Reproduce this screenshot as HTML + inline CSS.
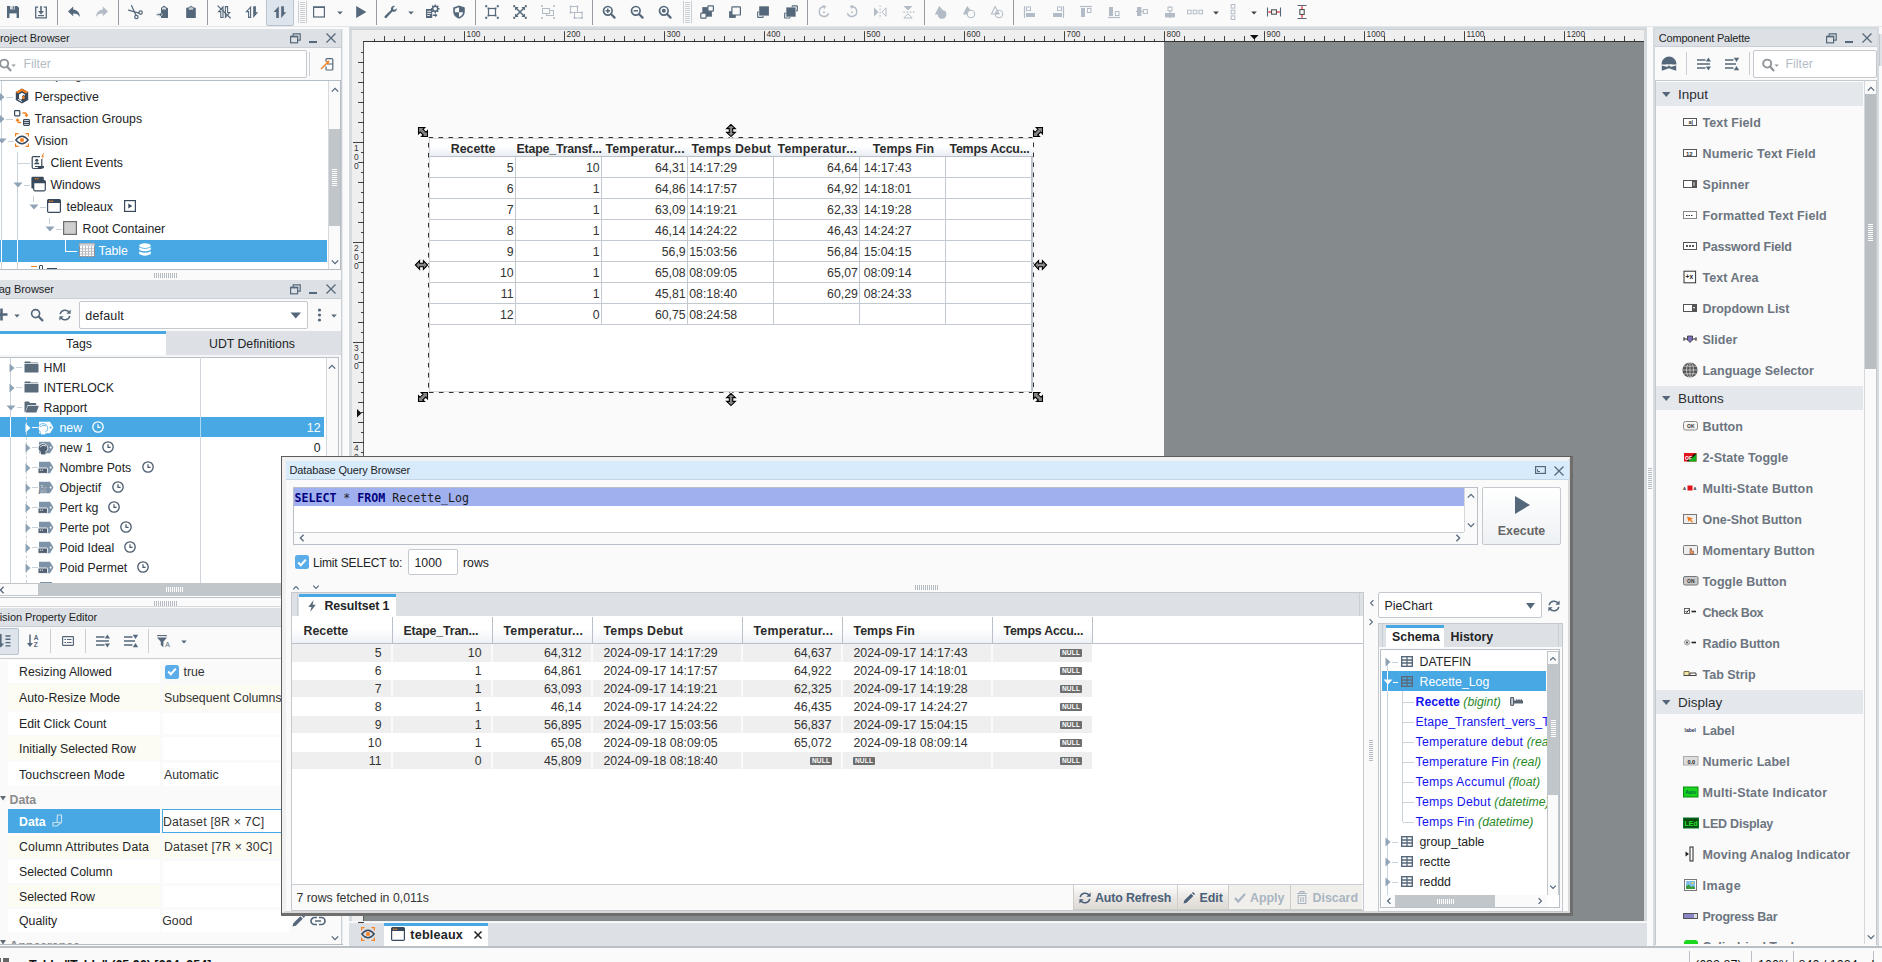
<!DOCTYPE html>
<html><head><meta charset="utf-8"><title>Designer</title>
<style>
html,body{margin:0;padding:0;}
body{width:1882px;height:962px;overflow:hidden;background:#fafafa;position:relative;font-family:"Liberation Sans","DejaVu Sans",sans-serif;font-size:12.3px;color:#222426;}
div,svg,span.a{position:absolute;box-sizing:border-box;}
svg{overflow:visible;}
.t{white-space:nowrap;}
.b{white-space:nowrap;font-weight:bold;font-size:12.4px;}
.clip{overflow:hidden;}
.mono{font-family:"DejaVu Sans Mono","Liberation Mono",monospace;font-size:11.6px;white-space:pre;}
</style></head><body>
<svg style="left:5px;top:4px;" width="16" height="16" viewBox="0 0 16 16"><path fill="#55687b" d="M2 2h10.2L14 3.8V14H2z"/><rect x="5" y="2" width="5" height="3.4" fill="#d5dade"/><rect x="7.8" y="2.5" width="1.4" height="2.4" fill="#55687b"/><rect x="4.4" y="9.4" width="7.2" height="4.6" fill="#fafafa"/></svg>
<svg style="left:33px;top:4px;" width="16" height="16" viewBox="0 0 16 16"><path fill="none" stroke="#55687b" stroke-width="1.3" d="M5.2 3.2H2.7v10.6h10.6V3.2h-2.5"/><path fill="#55687b" d="M7.2 2h1.6v5h2.2L8 10.4 5 7h2.2z"/><rect x="5" y="11" width="6" height="1.2" fill="#55687b"/></svg>
<div style="left:57px;top:0px;width:1px;height:25px;background:#959ba1;"></div>
<svg style="left:66px;top:4px;" width="16" height="16" viewBox="0 0 16 16"><path fill="#55687b" d="M7.2 2.6L2 7.4l5.2 4.8V9.4c3-.1 5.2.9 6.8 3.6-.3-4.400-2.700-7.200-6.800-7.600z"/></svg>
<svg style="left:94px;top:4px;" width="16" height="16" viewBox="0 0 16 16"><g transform="translate(16,0) scale(-1,1)"><path fill="#b3bcc6" d="M7.2 2.6L2 7.4l5.2 4.8V9.4c3-.1 5.2.9 6.8 3.6-.3-4.400-2.700-7.200-6.800-7.600z"/></g></svg>
<div style="left:118px;top:0px;width:1px;height:25px;background:#959ba1;"></div>
<svg style="left:127px;top:4px;" width="16" height="16" viewBox="0 0 16 16"><g fill="none" stroke="#55687b" stroke-width="1.2" stroke-linecap="round"><path d="M4.5 1.5L9 11.2"/><path d="M1.500 6.200L12 9.200"/><circle cx="9.400" cy="13" r="1.700"/><circle cx="13.600" cy="8.600" r="1.700"/></g></svg>
<svg style="left:155px;top:4px;" width="16" height="16" viewBox="0 0 16 16"><path fill="#55687b" d="M6 3.500h1.300a1.700 1.700 0 0 1 3.400 0H12l1 1V14H6z"/><circle cx="9" cy="3.400" r=".7" fill="#fafafa"/><rect x="7" y="4.200" width="4" height="1.200" fill="#fafafa"/><path fill="#55687b" stroke="#fafafa" stroke-width=".6" d="M1.500 9.800h3V8l3 2.600-3 2.600v-1.800h-3z"/></svg>
<svg style="left:183px;top:4px;" width="16" height="16" viewBox="0 0 16 16"><path fill="#55687b" d="M4 3.500h2.300a1.700 1.700 0 0 1 3.400 0H12l.8.800V14H3.200V4.300z"/><circle cx="8" cy="3.300" r=".7" fill="#fafafa"/><rect x="5.800" y="4.300" width="4.400" height="1.200" fill="#fafafa"/></svg>
<div style="left:207px;top:0px;width:1px;height:25px;background:#959ba1;"></div>
<svg style="left:216px;top:4px;" width="16" height="16" viewBox="0 0 16 16"><g fill="none" stroke="#55687b" stroke-width="1.100" stroke-linejoin="miter"><path d="M7 2.800L2.600 7.600H4.800V13.500H7z"/><path d="M9.400 2.600H11.600V8.500H13.700L9.400 13.300z"/></g><path stroke="#55687b" stroke-width="1.200" d="M1.600 1.600L14.600 14.200"/></svg>
<svg style="left:244px;top:4px;" width="16" height="16" viewBox="0 0 16 16"><path fill="none" stroke="#55687b" stroke-width="1.100" stroke-linejoin="miter" d="M6.600 3.200L2.400 7.600H4.600V13.400H6.600z"/><path fill="#55687b" d="M9.200 2.300H11.900V8.300H14.200L9.200 13.900z"/></svg>
<div style="left:266px;top:-1px;width:28px;height:27px;background:#dde4ec;border:1px solid #b9c3cd;border-radius:2px;"></div>
<svg style="left:272px;top:4px;" width="16" height="16" viewBox="0 0 16 16"><path fill="#55687b" d="M6.800 2.300L1.500 7.900H4.200V13.900H6.800z"/><path fill="#55687b" d="M9.200 2.300H11.900V8.300H14.200L9.200 13.900z"/></svg>
<svg style="left:298px;top:1px;" width="9" height="22" viewBox="0 0 9 22"><path stroke="#c9ced3" stroke-width="1" d="M.5 0v22M8.500 0v22"/><path stroke="#c9ced3" stroke-width="1" d="M2 1.5h5"/><path stroke="#c9ced3" stroke-width="1" d="M2 3.5h5"/><path stroke="#c9ced3" stroke-width="1" d="M2 5.5h5"/><path stroke="#c9ced3" stroke-width="1" d="M2 7.5h5"/><path stroke="#c9ced3" stroke-width="1" d="M2 9.5h5"/><path stroke="#c9ced3" stroke-width="1" d="M2 11.5h5"/><path stroke="#c9ced3" stroke-width="1" d="M2 13.5h5"/><path stroke="#c9ced3" stroke-width="1" d="M2 15.5h5"/><path stroke="#c9ced3" stroke-width="1" d="M2 17.5h5"/><path stroke="#c9ced3" stroke-width="1" d="M2 19.5h5"/><path stroke="#c9ced3" stroke-width="1" d="M2 21.5h5"/></svg>
<svg style="left:311px;top:4px;" width="16" height="16" viewBox="0 0 16 16"><rect x="2.600" y="3.200" width="10.800" height="9.800" fill="none" stroke="#55687b" stroke-width="1.200"/><rect x="2" y="2.400" width="12" height="1.600" fill="#55687b"/></svg>
<svg style="left:331.5px;top:4.5px;" width="16" height="16" viewBox="0 0 16 16"><path fill="#55687b" d="M5.200 6.600h5.600L8 9.600z"/></svg>
<svg style="left:353px;top:4px;" width="16" height="16" viewBox="0 0 16 16"><path fill="#55687b" d="M3.200 2L13.400 8 3.200 14z"/></svg>
<div style="left:376px;top:0px;width:1px;height:25px;background:#959ba1;"></div>
<svg style="left:383px;top:4px;" width="16" height="16" viewBox="0 0 16 16"><path fill="#55687b" d="M13.900 4.300a3.300 3.300 0 0 1-4.500 3.300L3.600 13.800a1.200 1.200 0 0 1-1.800-1.700L8 6.100a3.300 3.300 0 0 1 4-4.200L10 3.900l.4 1.500 1.500.4z"/></svg>
<svg style="left:402.5px;top:4.5px;" width="16" height="16" viewBox="0 0 16 16"><path fill="#55687b" d="M5.200 6.600h5.600L8 9.600z"/></svg>
<svg style="left:424px;top:4px;" width="16" height="16" viewBox="0 0 16 16"><path fill="#55687b" d="M2 5h6.200v9H2z"/><g stroke="#fafafa" stroke-width=".9"><path d="M3.200 7.300h4"/><path d="M3.200 9.400h4"/><path d="M3.200 11.500h2.600"/></g><g transform="translate(11.200,4.800)"><circle r="2.500" fill="none" stroke="#55687b" stroke-width="1.500"/><rect x="-.75" y="-4.300" width="1.500" height="1.700" fill="#55687b" transform="rotate(0)"/><rect x="-.75" y="-4.300" width="1.500" height="1.700" fill="#55687b" transform="rotate(45)"/><rect x="-.75" y="-4.300" width="1.500" height="1.700" fill="#55687b" transform="rotate(90)"/><rect x="-.75" y="-4.300" width="1.500" height="1.700" fill="#55687b" transform="rotate(135)"/><rect x="-.75" y="-4.300" width="1.500" height="1.700" fill="#55687b" transform="rotate(180)"/><rect x="-.75" y="-4.300" width="1.500" height="1.700" fill="#55687b" transform="rotate(225)"/><rect x="-.75" y="-4.300" width="1.500" height="1.700" fill="#55687b" transform="rotate(270)"/><rect x="-.75" y="-4.300" width="1.500" height="1.700" fill="#55687b" transform="rotate(315)"/></g><path fill="#55687b" d="M8.800 10.500h2.400V9l2.200 2.200-2.200 2.200v-1.500H8.800z"/></svg>
<svg style="left:451px;top:4px;" width="16" height="16" viewBox="0 0 16 16"><path fill="#55687b" d="M8 1.400l5.800 2.100v4.300c0 3.300-2.300 5.800-5.800 7.000C4.500 13.600 2.200 11.100 2.200 7.800V3.500z"/><path fill="#fafafa" d="M8 3.200v5H3.900V4.700z"/><path fill="#fafafa" d="M8 8.200h4.100c-.2 2.200-1.700 3.800-4.100 4.800z"/></svg>
<div style="left:475px;top:0px;width:1px;height:25px;background:#959ba1;"></div>
<svg style="left:484px;top:4px;" width="16" height="16" viewBox="0 0 16 16"><rect x="4.500" y="4.500" width="7" height="7" fill="none" stroke="#55687b" stroke-width="1.200"/><rect x="1.2000000000000002" y="1.2000000000000002" width="2" height="2" fill="#55687b"/><rect x="12.8" y="1.2000000000000002" width="2" height="2" fill="#55687b"/><rect x="1.2000000000000002" y="12.8" width="2" height="2" fill="#55687b"/><rect x="12.8" y="12.8" width="2" height="2" fill="#55687b"/><rect x="3.6" y="3.6" width="1.8" height="1.8" fill="#55687b"/><rect x="10.6" y="3.6" width="1.8" height="1.8" fill="#55687b"/><rect x="3.6" y="10.6" width="1.8" height="1.8" fill="#55687b"/><rect x="10.6" y="10.6" width="1.8" height="1.8" fill="#55687b"/></svg>
<svg style="left:512px;top:4px;" width="16" height="16" viewBox="0 0 16 16"><path stroke="#55687b" stroke-width="1.500" d="M4 4l8 8M12 4l-8 8"/><path fill="#55687b" d="M-1.200 -1.200h3.600l-3.600 3.600z" transform="translate(4.2,4.2) rotate(0)"/><path fill="#55687b" d="M-1.200 -1.200h3.600l-3.600 3.600z" transform="translate(11.8,4.2) rotate(90)"/><path fill="#55687b" d="M-1.200 -1.200h3.600l-3.600 3.600z" transform="translate(11.8,11.8) rotate(180)"/><path fill="#55687b" d="M-1.200 -1.200h3.600l-3.600 3.600z" transform="translate(4.2,11.8) rotate(270)"/><rect x="1.2000000000000002" y="1.2000000000000002" width="2" height="2" fill="#55687b"/><rect x="12.8" y="1.2000000000000002" width="2" height="2" fill="#55687b"/><rect x="1.2000000000000002" y="12.8" width="2" height="2" fill="#55687b"/><rect x="12.8" y="12.8" width="2" height="2" fill="#55687b"/></svg>
<svg style="left:540px;top:4px;" width="16" height="16" viewBox="0 0 16 16"><g fill="#fafafa" stroke="#b3bcc6" stroke-width="1"><rect x="6.500" y="6.500" width="7" height="5"/><rect x="2.500" y="4.500" width="7" height="5"/></g><rect x="1.1" y="1.1" width="1.8" height="1.8" fill="#b3bcc6"/><rect x="13.1" y="1.1" width="1.8" height="1.8" fill="#b3bcc6"/><rect x="1.1" y="13.1" width="1.8" height="1.8" fill="#b3bcc6"/><rect x="13.1" y="13.1" width="1.8" height="1.8" fill="#b3bcc6"/></svg>
<svg style="left:568px;top:4px;" width="16" height="16" viewBox="0 0 16 16"><g fill="none" stroke="#b3bcc6" stroke-width="1"><rect x="2.500" y="2.500" width="7" height="6"/><rect x="6.500" y="8.500" width="7.500" height="5.500"/></g><rect x="1.6" y="1.6" width="1.8" height="1.8" fill="#b3bcc6"/><rect x="8.6" y="1.6" width="1.8" height="1.8" fill="#b3bcc6"/><rect x="1.6" y="7.6" width="1.8" height="1.8" fill="#b3bcc6"/><rect x="13.1" y="7.6" width="1.8" height="1.8" fill="#b3bcc6"/><rect x="5.6" y="13.1" width="1.8" height="1.8" fill="#b3bcc6"/><rect x="13.1" y="13.1" width="1.8" height="1.8" fill="#b3bcc6"/></svg>
<div style="left:592px;top:0px;width:1px;height:25px;background:#959ba1;"></div>
<svg style="left:601px;top:4px;" width="16" height="16" viewBox="0 0 16 16"><circle cx="6.800" cy="6.800" r="4.300" fill="none" stroke="#55687b" stroke-width="1.700"/><path stroke="#55687b" stroke-width="2.200" stroke-linecap="round" d="M10.200 10.200L13.600 13.600"/><path stroke="#55687b" stroke-width="1.500" d="M4.600 6.800h4.400M6.800 4.600v4.400"/></svg>
<svg style="left:629px;top:4px;" width="16" height="16" viewBox="0 0 16 16"><circle cx="6.800" cy="6.800" r="4.300" fill="none" stroke="#55687b" stroke-width="1.700"/><path stroke="#55687b" stroke-width="2.200" stroke-linecap="round" d="M10.200 10.200L13.600 13.600"/><path stroke="#55687b" stroke-width="1.500" d="M4.600 6.800h4.400"/></svg>
<svg style="left:657px;top:4px;" width="16" height="16" viewBox="0 0 16 16"><circle cx="6.800" cy="6.800" r="4.300" fill="none" stroke="#55687b" stroke-width="1.700"/><path stroke="#55687b" stroke-width="2.200" stroke-linecap="round" d="M10.200 10.200L13.600 13.600"/><circle cx="6.800" cy="6.800" r="2" fill="#55687b"/></svg>
<svg style="left:683px;top:1px;" width="9" height="22" viewBox="0 0 9 22"><path stroke="#c9ced3" stroke-width="1" d="M.5 0v22M8.500 0v22"/><path stroke="#c9ced3" stroke-width="1" d="M2 1.5h5"/><path stroke="#c9ced3" stroke-width="1" d="M2 3.5h5"/><path stroke="#c9ced3" stroke-width="1" d="M2 5.5h5"/><path stroke="#c9ced3" stroke-width="1" d="M2 7.5h5"/><path stroke="#c9ced3" stroke-width="1" d="M2 9.5h5"/><path stroke="#c9ced3" stroke-width="1" d="M2 11.5h5"/><path stroke="#c9ced3" stroke-width="1" d="M2 13.5h5"/><path stroke="#c9ced3" stroke-width="1" d="M2 15.5h5"/><path stroke="#c9ced3" stroke-width="1" d="M2 17.5h5"/><path stroke="#c9ced3" stroke-width="1" d="M2 19.5h5"/><path stroke="#c9ced3" stroke-width="1" d="M2 21.5h5"/></svg>
<svg style="left:699px;top:4px;" width="16" height="16" viewBox="0 0 16 16"><rect x="3.3" y="3.1" width="9.600000000000001" height="9.6" fill="#55687b"/><rect x="8.9" y="1.7999999999999998" width="5.499999999999999" height="5.3999999999999995" rx=".6" fill="#fafafa" stroke="#55687b" stroke-width="1.200"/><rect x="1.7999999999999998" y="9.1" width="5.3" height="5.1000000000000005" rx=".6" fill="#fafafa" stroke="#55687b" stroke-width="1.200"/></svg>
<svg style="left:727px;top:4px;" width="16" height="16" viewBox="0 0 16 16"><rect x="2.1" y="7.2" width="6.700000000000001" height="6.7" fill="#55687b"/><rect x="4.8999999999999995" y="2.9" width="8.5" height="8.100000000000001" rx=".6" fill="#fafafa" stroke="#55687b" stroke-width="1.200"/></svg>
<svg style="left:755px;top:4px;" width="16" height="16" viewBox="0 0 16 16"><rect x="2.7" y="7.8999999999999995" width="5.3999999999999995" height="5.4" rx=".6" fill="#fafafa" stroke="#55687b" stroke-width="1.200"/><rect x="3.700" y="1.800" width="10.700" height="10.300" fill="#fafafa"/><rect x="4.2" y="2.3" width="9.7" height="9.3" fill="#55687b"/></svg>
<svg style="left:783px;top:4px;" width="16" height="16" viewBox="0 0 16 16"><rect x="9.2" y="1.7999999999999998" width="5.1000000000000005" height="5.1" rx=".6" fill="#fafafa" stroke="#55687b" stroke-width="1.200"/><rect x="1.7000000000000002" y="9.2" width="5.1000000000000005" height="4.8" rx=".6" fill="#fafafa" stroke="#55687b" stroke-width="1.200"/><rect x="2.800" y="2.900" width="10.300" height="10.300" fill="#fafafa"/><rect x="3.3" y="3.4" width="9.3" height="9.299999999999999" fill="#55687b"/></svg>
<div style="left:807px;top:0px;width:1px;height:25px;background:#959ba1;"></div>
<svg style="left:816px;top:4px;" width="16" height="16" viewBox="0 0 16 16"><g transform="translate(16,0) scale(-1,1)"><path fill="none" stroke="#b3bcc6" stroke-width="1.400" d="M3.400 9.200a4.800 4.800 0 1 0 4.400-6.400"/><path fill="#b3bcc6" d="M8.600 .600v4.600L5.600 2.900z" transform="rotate(20 8 3)"/><circle cx="8" cy="8.200" r="1" fill="#b3bcc6"/></g></svg>
<svg style="left:844px;top:4px;" width="16" height="16" viewBox="0 0 16 16"><path fill="none" stroke="#b3bcc6" stroke-width="1.400" d="M3.400 9.200a4.800 4.800 0 1 0 4.400-6.400"/><path fill="#b3bcc6" d="M8.600 .600v4.600L5.600 2.900z" transform="rotate(20 8 3)"/><circle cx="8" cy="8.200" r="1" fill="#b3bcc6"/></svg>
<svg style="left:872px;top:4px;" width="16" height="16" viewBox="0 0 16 16"><path fill="#b3bcc6" d="M2 3.500L6.500 8 2 12.500z"/><path fill="none" stroke="#b3bcc6" stroke-width="1" d="M14 3.800L9.800 8 14 12.200z"/><path stroke="#b3bcc6" stroke-width="1.200" stroke-dasharray="1.600 1.600" d="M8.100 1.500v13"/></svg>
<svg style="left:900px;top:4px;" width="16" height="16" viewBox="0 0 16 16"><g transform="rotate(90 8 8)"><path fill="#b3bcc6" d="M2 3.500L6.500 8 2 12.500z"/><path fill="none" stroke="#b3bcc6" stroke-width="1" d="M14 3.800L9.800 8 14 12.200z"/><path stroke="#b3bcc6" stroke-width="1.200" stroke-dasharray="1.600 1.600" d="M8.100 1.500v13"/></g></svg>
<div style="left:924px;top:0px;width:1px;height:25px;background:#959ba1;"></div>
<svg style="left:933px;top:4px;" width="16" height="16" viewBox="0 0 16 16"><path fill="#b3bcc6" d="M6.200 2L1.800 10.400h3a4.300 4.300 0 1 0 5.200-4.200z"/></svg>
<svg style="left:961px;top:4px;" width="16" height="16" viewBox="0 0 16 16"><path fill="#b3bcc6" d="M6.200 2L1.800 10.400h4.600a3.800 3.800 0 0 1 3.200-4.200z"/><circle cx="10" cy="10" r="3.700" fill="none" stroke="#b3bcc6" stroke-width="1.100"/></svg>
<svg style="left:989px;top:4px;" width="16" height="16" viewBox="0 0 16 16"><path fill="none" stroke="#b3bcc6" stroke-width="1.100" d="M6.200 2.600L2.400 10h7.600z"/><circle cx="10" cy="10" r="3.700" fill="none" stroke="#b3bcc6" stroke-width="1.100"/><path fill="#b3bcc6" d="M6.500 10a3.600 3.600 0 0 1 2.300-3l1.200 3z"/></svg>
<div style="left:1013px;top:0px;width:1px;height:25px;background:#959ba1;"></div>
<svg style="left:1022px;top:4px;" width="16" height="16" viewBox="0 0 16 16"><path stroke="#b3bcc6" stroke-width="1.200" d="M2.500 2v12"/><rect x="4.500" y="3" width="4" height="3.600" fill="none" stroke="#b3bcc6" stroke-width="1"/><rect x="4" y="9" width="9" height="4" fill="#b3bcc6"/></svg>
<svg style="left:1050px;top:4px;" width="16" height="16" viewBox="0 0 16 16"><path stroke="#b3bcc6" stroke-width="1.200" d="M13.500 2v12"/><rect x="7.500" y="3" width="4" height="3.600" fill="none" stroke="#b3bcc6" stroke-width="1"/><rect x="3" y="9" width="9" height="4" fill="#b3bcc6"/></svg>
<svg style="left:1078px;top:4px;" width="16" height="16" viewBox="0 0 16 16"><path stroke="#b3bcc6" stroke-width="1.200" d="M2 2.500h12"/><rect x="9.400" y="4.500" width="3.600" height="4" fill="none" stroke="#b3bcc6" stroke-width="1"/><rect x="3" y="4" width="4" height="9" fill="#b3bcc6"/></svg>
<svg style="left:1106px;top:4px;" width="16" height="16" viewBox="0 0 16 16"><path stroke="#b3bcc6" stroke-width="1.200" d="M2 13.500h12"/><rect x="9.400" y="7.500" width="3.600" height="4" fill="none" stroke="#b3bcc6" stroke-width="1"/><rect x="3" y="3" width="4" height="9" fill="#b3bcc6"/></svg>
<svg style="left:1134px;top:4px;" width="16" height="16" viewBox="0 0 16 16"><path stroke="#b3bcc6" stroke-width="1.200" d="M2 7.500h12"/><rect x="9.400" y="5.500" width="4" height="4" fill="#fafafa" stroke="#b3bcc6" stroke-width="1"/><rect x="3" y="3" width="4.400" height="9" fill="#b3bcc6"/></svg>
<svg style="left:1162px;top:4px;" width="16" height="16" viewBox="0 0 16 16"><path stroke="#b3bcc6" stroke-width="1.200" d="M8 2v12"/><rect x="6" y="3.200" width="4" height="3.600" fill="#fafafa" stroke="#b3bcc6" stroke-width="1"/><rect x="3" y="9" width="10" height="4.400" fill="#b3bcc6"/></svg>
<svg style="left:1187px;top:4px;" width="16" height="16" viewBox="0 0 16 16"><rect x="0.5" y="6.200" width="3.600" height="3.600" fill="none" stroke="#b3bcc6" stroke-width="1"/><rect x="6.2" y="6.200" width="3.600" height="3.600" fill="none" stroke="#b3bcc6" stroke-width="1"/><rect x="11.9" y="6.200" width="3.600" height="3.600" fill="none" stroke="#b3bcc6" stroke-width="1"/></svg>
<svg style="left:1207.5px;top:4.5px;" width="16" height="16" viewBox="0 0 16 16"><path fill="#3c4043" d="M5.200 6.600h5.600L8 9.600z"/></svg>
<svg style="left:1225px;top:4px;" width="16" height="16" viewBox="0 0 16 16"><g transform="rotate(90 8 8)"><rect x="0.5" y="6.200" width="3.600" height="3.600" fill="none" stroke="#b3bcc6" stroke-width="1"/><rect x="6.2" y="6.200" width="3.600" height="3.600" fill="none" stroke="#b3bcc6" stroke-width="1"/><rect x="11.9" y="6.200" width="3.600" height="3.600" fill="none" stroke="#b3bcc6" stroke-width="1"/></g></svg>
<svg style="left:1245.5px;top:4.5px;" width="16" height="16" viewBox="0 0 16 16"><path fill="#3c4043" d="M5.200 6.600h5.600L8 9.600z"/></svg>
<svg style="left:1266px;top:4px;" width="16" height="16" viewBox="0 0 16 16"><path stroke="#e0202a" stroke-width="1.200" d="M2.200 8h11.600"/><path stroke="#55687b" stroke-width="1.100" d="M1.500 3.500v9M14.500 3.500v9"/><rect x="5.600" y="5.800" width="4.800" height="4.400" fill="#fafafa" stroke="#444" stroke-width="1"/></svg>
<svg style="left:1293.5px;top:4px;" width="16" height="16" viewBox="0 0 16 16"><g transform="rotate(90 8 8)"><path stroke="#e0202a" stroke-width="1.200" d="M2.200 8h11.600"/><path stroke="#55687b" stroke-width="1.100" d="M1.500 3.500v9M14.500 3.500v9"/><rect x="5.600" y="5.800" width="4.800" height="4.400" fill="#fafafa" stroke="#444" stroke-width="1"/></g></svg>
<div style="left:0px;top:26px;width:1882px;height:1px;background:#e3e6e9;"></div>
<div style="left:341px;top:29px;width:2px;height:916px;background:#e9ecee;border-left:1px solid #c9cfd5;"></div>
<div style="left:0px;top:29px;width:341px;height:19px;background:#dde1e5;border-bottom:1px solid #c9cfd5;"></div>
<div class="t" style="left:-7.3px;top:29.5px;line-height:16px;font-size:11px;letter-spacing:-0.042px;">Project Browser</div>
<svg style="left:290px;top:33px;" width="11" height="11" viewBox="0 0 11 11"><path fill="none" stroke="#55687b" stroke-width="1.200" d="M3.200 3V.800h7v6.400H8"/><rect x=".6" y="3.400" width="7" height="6.400" fill="none" stroke="#55687b" stroke-width="1.200"/><rect x="0" y="2.800" width="8.200" height="1.600" fill="#55687b"/></svg><div style="left:309px;top:41px;width:8px;height:2px;background:#55687b;"></div><svg style="left:326px;top:33px;" width="10" height="10" viewBox="0 0 10 10"><path stroke="#55687b" stroke-width="1.300" d="M.5 .5l9 9M9.500 .5l-9 9"/></svg>
<div style="left:-2px;top:50px;width:309px;height:28px;background:#fff;border:1px solid #c3c9cf;border-radius:2px;"></div>
<svg style="left:-1px;top:57.5px;" width="18" height="14" viewBox="0 0 18 14"><circle cx="5.200" cy="5.600" r="4" fill="none" stroke="#8e9499" stroke-width="1.900"/><path stroke="#8e9499" stroke-width="2.300" stroke-linecap="round" d="M8.200 8.800L11.400 12.300"/><path fill="#8e9499" d="M12.400 6.400h4.400L14.600 8.800z"/></svg>
<div class="t" style="left:23.5px;top:56.0px;line-height:16px;color:#b4bcc5;">Filter</div>
<div style="left:309px;top:52px;width:1px;height:24px;background:#c9cfd5;"></div>
<svg style="left:320px;top:57px;" width="14" height="14" viewBox="0 0 14 14"><path fill="none" stroke="#55687b" stroke-width="1.200" d="M6 4.500V2.600q0-1 1-1h4.800q1 0 1 1V12q0 1-1 1H7q-1 0-1-1V9.500M7 7h6"/><path stroke="#f58220" stroke-width="1.500" d="M1 12L7.500 5.500"/><path fill="#f58220" d="M9.500 3.600L8.500 7.600 5.400 4.600z"/></svg>
<div style="left:-2px;top:80px;width:343px;height:190px;background:#fff;border:1px solid #b4bcc4;"></div>
<div style="left:328px;top:81px;width:12px;height:188px;background:#fafafa;border-left:1px solid #d5d9dd;"></div><div style="left:329px;top:129px;width:11px;height:96.5px;background:#c1c6cb;"></div><svg style="left:334.5px;top:89.5px" width="1" height="1"><path fill="none" stroke="#55687b" stroke-width="1.3" d="M-3.2 1.6L0 -1.6L3.2 1.6"/></svg><svg style="left:334.5px;top:261.5px" width="1" height="1"><path fill="none" stroke="#55687b" stroke-width="1.3" d="M-3.2 -1.6L0 1.6L3.2 -1.6"/></svg><div style="left:332px;top:169.25px;width:5px;height:1px;background:#fff;"></div><div style="left:332px;top:171.25px;width:5px;height:1px;background:#fff;"></div><div style="left:332px;top:173.25px;width:5px;height:1px;background:#fff;"></div><div style="left:332px;top:175.25px;width:5px;height:1px;background:#fff;"></div><div style="left:332px;top:177.25px;width:5px;height:1px;background:#fff;"></div><div style="left:332px;top:179.25px;width:5px;height:1px;background:#fff;"></div><div style="left:332px;top:181.25px;width:5px;height:1px;background:#fff;"></div><div style="left:332px;top:183.25px;width:5px;height:1px;background:#fff;"></div><div style="left:332px;top:185.25px;width:5px;height:1px;background:#fff;"></div>
<div style="left:1px;top:81px;width:1px;height:188px;background:#c9d3dc;"></div>
<div style="left:17px;top:152px;width:1px;height:117px;background:#c9d3dc;"></div>
<div style="left:-1px;top:240px;width:328px;height:22px;background:#47a8e4;"></div>
<div style="left:1px;top:240px;width:1px;height:22px;background:#fff;"></div>
<div style="left:17px;top:240px;width:1px;height:22px;background:#fff;"></div>
<svg style="left:-1px;top:92px;" width="6" height="10" viewBox="0 0 6 10"><path fill="#8fa3b7" d="M.5 .5L5.500 5L.5 9.500z"/></svg>
<div style="left:6px;top:97px;width:7px;height:1px;background:#c9d3dc;"></div>
<svg style="left:15px;top:88px;" width="14" height="16" viewBox="0 0 14 16"><path fill="#37495a" d="M7 .5l6.200 3.600v7.800L7 15.500 .8 11.900V4.100z"/><path fill="#f58220" d="M7 .5l6.200 3.600L11 5.400 7 3 3 5.400 .8 4.100z"/><path fill="#fff" d="M4 6.500L7 4.800l3 1.700v1.300L8.600 7 7 8v3l-1.200.7L4 10.500z"/><circle cx="8.400" cy="9.600" r="1.500" fill="#f58220"/><path fill="#fff" d="M2.500 11.500l1-.6 3.500 2v1.200z"/></svg>
<div class="t" style="left:34.5px;top:89.0px;line-height:16px;">Perspective</div>
<svg style="left:-1px;top:114px;" width="6" height="10" viewBox="0 0 6 10"><path fill="#8fa3b7" d="M.5 .5L5.500 5L.5 9.500z"/></svg>
<div style="left:6px;top:119px;width:7px;height:1px;background:#c9d3dc;"></div>
<svg style="left:14px;top:110px;" width="16" height="16" viewBox="0 0 16 16"><rect x=".6" y=".6" width="5.200" height="5.200" rx=".8" fill="none" stroke="#37495a" stroke-width="1.200"/><g fill="none" stroke="#37495a" stroke-width="1.100"><rect x="9.600" y="9.600" width="5.800" height="5.800" rx=".8"/><path d="M9.600 11.600h5.800M9.600 13.500h5.800"/></g><g fill="none" stroke="#f58220" stroke-width="1.300"><path d="M8.500 3h2.500q1.500 0 1.500 1.500V6"/><path d="M11 4.600L12.500 6.200 14 4.600"/><path d="M7 12.500H5q-1.500 0-1.500-1.500V9.500"/><path d="M2 10.800L3.500 9.200 5 10.800"/></g></svg>
<div class="t" style="left:34.5px;top:111.0px;line-height:16px;">Transaction Groups</div>
<svg style="left:-3px;top:138px;" width="10" height="6" viewBox="0 0 10 6"><path fill="#8fa3b7" d="M.5 .5h9L5 5.500z"/></svg>
<div style="left:8px;top:141px;width:6px;height:1px;background:#c9d3dc;"></div>
<svg style="left:15px;top:133px;" width="14" height="14" viewBox="0 0 14 14"><g fill="none" stroke="#f58220" stroke-width="1.200"><path d="M.6 3.500V.6H3.500M10.500 .6h2.900v2.900M13.400 10.500v2.900h-2.900M3.500 13.400H.6V10.500"/></g><path fill="none" stroke="#37495a" stroke-width="1.300" d="M.8 7Q7 -.5 13.200 7 7 14.500 .8 7z"/><circle cx="7" cy="7" r="2.100" fill="#f58220"/></svg>
<div class="t" style="left:34.5px;top:133.0px;line-height:16px;">Vision</div>
<svg style="left:31px;top:153px;" width="14" height="17" viewBox="0 0 14 17"><path fill="none" stroke="#37495a" stroke-width="1.200" d="M9 3.600H2.200q-1 0-1 1V14q0 1.500 1.500 1.500h8"/><path fill="#37495a" d="M4 13h9v1q0 1.600-1.600 1.600H5.600q1.400 0 1.400-1.600H4z"/><circle cx="5.800" cy="7.200" r="1.500" fill="#37495a"/><path fill="#37495a" d="M3.200 11.200q0-2 2.600-2t2.600 2z"/><path fill="none" stroke="#37495a" stroke-width="1.200" d="M10.800 6v7"/><path fill="#f58220" d="M12.300 .2l-2 3.600h1.200l-.8 3 2.400-4h-1.300l1.300-2.600z"/></svg>
<div class="t" style="left:50.5px;top:155.0px;line-height:16px;">Client Events</div>
<svg style="left:13px;top:182px;" width="10" height="6" viewBox="0 0 10 6"><path fill="#8fa3b7" d="M.5 .5h9L5 5.500z"/></svg>
<div style="left:24px;top:185px;width:6px;height:1px;background:#c9d3dc;"></div>
<svg style="left:31px;top:176px;" width="15" height="16" viewBox="0 0 15 16"><path fill="#37495a" d="M1.600 .8h10q1.200 0 1.200 1.200v2.600H4V12.600H1.600q-1.200 0-1.200-1.200V2q0-1.200 1.200-1.200z"/><rect x="2.700" y="4.600" width="11.600" height="10.200" rx="1.200" fill="#fff" stroke="#37495a" stroke-width="1.200"/><path fill="#37495a" d="M2.700 5.600q0-1 1-1h9.600q1 0 1 1v1.600H2.700z"/><rect x="4" y="2.200" width="1.400" height="1.200" fill="#f58220"/><rect x="6.200" y="2.200" width="1.400" height="1.200" fill="#f58220"/></svg>
<div class="t" style="left:50.5px;top:177.0px;line-height:16px;">Windows</div>
<svg style="left:29px;top:204px;" width="10" height="6" viewBox="0 0 10 6"><path fill="#8fa3b7" d="M.5 .5h9L5 5.500z"/></svg>
<div style="left:40px;top:207px;width:6px;height:1px;background:#c9d3dc;"></div>
<svg style="left:47px;top:199px;" width="14" height="14" viewBox="0 0 14 14"><rect x=".6" y=".6" width="12.800" height="12.800" rx="1.200" fill="#fff" stroke="#37495a" stroke-width="1.200"/><path fill="#37495a" d="M.6 1.800q0-1.200 1.200-1.200h10.400q1.200 0 1.200 1.200V4H.6z"/><rect x="2" y="1.600" width="1.500" height="1.300" fill="#f58220"/><rect x="4.400" y="1.600" width="1.500" height="1.300" fill="#f58220"/></svg>
<div class="t" style="left:66.5px;top:199.0px;line-height:16px;">tebleaux</div>
<svg style="left:45px;top:226px;" width="10" height="6" viewBox="0 0 10 6"><path fill="#8fa3b7" d="M.5 .5h9L5 5.500z"/></svg>
<div style="left:56px;top:229px;width:6px;height:1px;background:#c9d3dc;"></div>
<svg style="left:63px;top:221px;" width="14" height="14" viewBox="0 0 14 14"><rect x=".6" y=".6" width="12.800" height="12.800" fill="#cfcfcf" stroke="#6d6d6d" stroke-width="1.200"/></svg>
<div class="t" style="left:82.5px;top:221.0px;line-height:16px;">Root Container</div>
<svg style="left:79px;top:243px;" width="16" height="14" viewBox="0 0 16 14"><rect x=".5" y=".5" width="15" height="13" fill="#fff" stroke="#8c9298" stroke-width="1"/><rect x=".5" y=".5" width="15" height="2.400" fill="#cfd3d7"/><path stroke="#b9bec3" stroke-width="1" d="M3.5 3v10.500"/><path stroke="#b9bec3" stroke-width="1" d="M6.5 3v10.500"/><path stroke="#b9bec3" stroke-width="1" d="M9.5 3v10.500"/><path stroke="#b9bec3" stroke-width="1" d="M12.5 3v10.500"/><path stroke="#b9bec3" stroke-width="1" d="M1 5.800000000000001h14"/><path stroke="#b9bec3" stroke-width="1" d="M1 8.4h14"/><path stroke="#b9bec3" stroke-width="1" d="M1 11.0h14"/></svg>
<div class="t" style="left:98.5px;top:243.0px;line-height:16px;color:#fff;">Table</div>
<div style="left:18px;top:163px;width:12px;height:1px;background:#c9d3dc;"></div>
<div style="left:33px;top:196px;width:1px;height:6px;background:#c9d3dc;"></div>
<div style="left:49px;top:218px;width:1px;height:6px;background:#c9d3dc;"></div>
<div style="left:65px;top:240px;width:1px;height:12px;background:#fff;"></div>
<div style="left:65px;top:251px;width:12px;height:1px;background:#fff;"></div>
<svg style="left:124px;top:200px;" width="12" height="12" viewBox="0 0 12 12"><rect x=".6" y=".6" width="10.800" height="10.800" fill="#fff" stroke="#37495a" stroke-width="1.200"/><path fill="#37495a" d="M4.300 3.400L8.200 6 4.300 8.600z"/></svg>
<svg style="left:139px;top:243px;" width="12" height="14" viewBox="0 0 12 14"><ellipse cx="6" cy="2.600" rx="5.800" ry="2.400" fill="#fff"/><path fill="#fff" d="M.2 4.200q5.800 3 11.600 0v2.600q-5.800 3-11.600 0z"/><path fill="#fff" d="M.2 8.300q5.800 3 11.600 0v2.800q-5.800 3.400-11.600 0z"/></svg>
<div style="left:-1px;top:81px;width:328px;height:6px;overflow:hidden;"><div class="t" style="left:35px;top:-14.0px;line-height:16px;">Scripting</div><div style="left:16px;top:-10.5px;width:12px;height:10px;border:1.500px solid #37495a;border-radius:2px;"></div></div>
<div style="left:-1px;top:262px;width:328px;height:7px;overflow:hidden;"><div class="t" style="left:51px;top:4.0px;line-height:16px;">Templates</div><div style="left:40px;top:3px;width:4px;height:8px;border:1.200px solid #37495a;border-radius:1px;"></div><div style="left:32px;top:3.5px;width:6px;height:1.5px;background:#f58220;"></div><div style="left:48px;top:6px;width:10px;height:3px;background:#37495a;"></div></div>
<svg style="left:154px;top:273px;" width="24" height="5" viewBox="0 0 24 5"><rect x="0" y="0" width="1" height="5" fill="#b4bbc2"/><rect x="2" y="0" width="1" height="5" fill="#b4bbc2"/><rect x="4" y="0" width="1" height="5" fill="#b4bbc2"/><rect x="6" y="0" width="1" height="5" fill="#b4bbc2"/><rect x="8" y="0" width="1" height="5" fill="#b4bbc2"/><rect x="10" y="0" width="1" height="5" fill="#b4bbc2"/><rect x="12" y="0" width="1" height="5" fill="#b4bbc2"/><rect x="14" y="0" width="1" height="5" fill="#b4bbc2"/><rect x="16" y="0" width="1" height="5" fill="#b4bbc2"/><rect x="18" y="0" width="1" height="5" fill="#b4bbc2"/><rect x="20" y="0" width="1" height="5" fill="#b4bbc2"/><rect x="22" y="0" width="1" height="5" fill="#b4bbc2"/></svg>
<div style="left:0px;top:280px;width:341px;height:19px;background:#dde1e5;border-bottom:1px solid #c9cfd5;"></div>
<div class="t" style="left:-6.7px;top:280.5px;line-height:16px;font-size:11px;letter-spacing:-0.048px;">Tag Browser</div>
<svg style="left:290px;top:284px;" width="11" height="11" viewBox="0 0 11 11"><path fill="none" stroke="#55687b" stroke-width="1.200" d="M3.200 3V.800h7v6.400H8"/><rect x=".6" y="3.400" width="7" height="6.400" fill="none" stroke="#55687b" stroke-width="1.200"/><rect x="0" y="2.800" width="8.200" height="1.600" fill="#55687b"/></svg><div style="left:309px;top:292px;width:8px;height:2px;background:#55687b;"></div><svg style="left:326px;top:284px;" width="10" height="10" viewBox="0 0 10 10"><path stroke="#55687b" stroke-width="1.300" d="M.5 .5l9 9M9.500 .5l-9 9"/></svg>
<svg style="left:-5px;top:308px;" width="13" height="13" viewBox="0 0 13 13"><path stroke="#55687b" stroke-width="2.600" d="M6.500 .5v12M.5 6.500h12"/></svg>
<svg style="left:8.5px;top:307.5px;" width="16" height="16" viewBox="0 0 16 16"><path fill="#55687b" d="M5.200 6.600h5.600L8 9.600z"/></svg>
<svg style="left:30px;top:308px;" width="14" height="14" viewBox="0 0 14 14"><circle cx="5.600" cy="5.600" r="4" fill="none" stroke="#55687b" stroke-width="1.700"/><path stroke="#55687b" stroke-width="2.200" stroke-linecap="round" d="M8.800 8.800L12.400 12.400"/></svg>
<svg style="left:59px;top:309px;" width="12" height="12" viewBox="0 0 12 12"><g fill="none" stroke="#55687b" stroke-width="1.500"><path d="M1.200 5.200A5 5 0 0 1 10.400 3.600"/><path d="M10.800 6.800A5 5 0 0 1 1.600 8.400"/></g><path fill="#55687b" d="M11.600 .6v4.200H7.400z"/><path fill="#55687b" d="M.4 11.400V7.200h4.200z"/></svg>
<div style="left:79px;top:301px;width:229px;height:28px;background:#fff;border:1px solid #c3c9cf;border-radius:2px;"></div>
<div class="t" style="left:85.3px;top:307.8px;line-height:16px;font-size:12.5px;letter-spacing:0.168px;">default</div>
<svg style="left:290px;top:312px;" width="12" height="7" viewBox="0 0 12 7"><path fill="#55687b" d="M.5 .5h10.500L5.750 6.500z"/></svg>
<svg style="left:317px;top:308px;" width="5" height="14" viewBox="0 0 5 14"><circle cx="2.500" cy="2" r="1.600" fill="#55687b"/><circle cx="2.500" cy="7" r="1.600" fill="#55687b"/><circle cx="2.500" cy="12" r="1.600" fill="#55687b"/></svg>
<svg style="left:325.5px;top:307.5px;" width="16" height="16" viewBox="0 0 16 16"><path fill="#55687b" d="M5.200 6.600h5.600L8 9.600z"/></svg>
<div style="left:0px;top:331px;width:341px;height:24px;background:#dde1e5;"></div>
<div style="left:0px;top:331px;width:166px;height:24px;background:#fff;border-top:3px solid #47a8e4;"></div>
<div class="t" style="left:66px;top:335.5px;line-height:16px;">Tags</div>
<div class="t" style="left:209px;top:335.5px;line-height:16px;">UDT Definitions</div>
<div style="left:0px;top:354.5px;width:341px;height:2.5px;background:#f4f5f6;"></div>
<div style="left:-2px;top:357px;width:341px;height:241px;background:#fff;border:1px solid #b9c0c7;"></div>
<div style="left:200px;top:357px;width:1px;height:226px;background:#cfd5da;"></div>
<div style="left:325.5px;top:358px;width:12.5px;height:225px;background:#fafafa;border-left:1px solid #d5d9dd;"></div><div style="left:326.5px;top:358px;width:11.5px;height:0px;background:#c1c6cb;"></div><svg style="left:332.25px;top:366.5px" width="1" height="1"><path fill="none" stroke="#55687b" stroke-width="1.3" d="M-3.2 1.6L0 -1.6L3.2 1.6"/></svg><svg style="left:332.25px;top:575.5px" width="1" height="1"><path fill="none" stroke="#55687b" stroke-width="1.3" d="M-3.2 -1.6L0 1.6L3.2 -1.6"/></svg>
<div style="left:-1px;top:417px;width:325.3px;height:20px;background:#47a8e4;"></div>
<div style="left:200px;top:417px;width:1px;height:20px;background:#fff;opacity:.55;"></div>
<div style="left:10px;top:357px;width:1px;height:226px;background:#c9d3dc;"></div>
<div style="left:10px;top:417px;width:1px;height:20px;background:#fff;"></div>
<div style="left:26px;top:417px;width:1px;height:166px;border-left:1px dashed #c9d3dc;"></div>
<svg style="left:9px;top:362.5px;" width="6" height="10" viewBox="0 0 6 10"><path fill="#8fa3b7" d="M.5 .5L5.500 5L.5 9.500z"/></svg>
<div style="left:16px;top:367px;width:6px;height:1px;background:#c9d3dc;"></div>
<svg style="left:23.5px;top:361px;" width="15" height="12" viewBox="0 0 15 12"><path fill="#5a6b7c" d="M.5 2.200V1q0-.6.6-.6h4.600q.5 0 .7.400l.3.600h7q.6 0 .6.600v.2z"/><path fill="#5a6b7c" d="M.5 3h14v8q0 .6-.6.6H1.100q-.6 0-.6-.6z"/></svg>
<div class="t" style="left:43.5px;top:359.8px;line-height:16px;">HMI</div>
<svg style="left:9px;top:382.5px;" width="6" height="10" viewBox="0 0 6 10"><path fill="#8fa3b7" d="M.5 .5L5.500 5L.5 9.500z"/></svg>
<div style="left:16px;top:387px;width:6px;height:1px;background:#c9d3dc;"></div>
<svg style="left:23.5px;top:381px;" width="15" height="12" viewBox="0 0 15 12"><path fill="#5a6b7c" d="M.5 2.200V1q0-.6.6-.6h4.600q.5 0 .7.400l.3.600h7q.6 0 .6.600v.2z"/><path fill="#5a6b7c" d="M.5 3h14v8q0 .6-.6.6H1.100q-.6 0-.6-.6z"/></svg>
<div class="t" style="left:43.5px;top:379.8px;line-height:16px;">INTERLOCK</div>
<svg style="left:6px;top:404.5px;" width="10" height="6" viewBox="0 0 10 6"><path fill="#8fa3b7" d="M.5 .5h9L5 5.500z"/></svg>
<div style="left:17px;top:407px;width:5px;height:1px;background:#c9d3dc;"></div>
<svg style="left:23.5px;top:401px;" width="15" height="12" viewBox="0 0 15 12"><path fill="#5a6b7c" d="M.5 11V1.200q0-.7.7-.7h3.800l1 1.500h5.500q.7 0 .7.700V4H3.600L1.400 11z"/><path fill="#5a6b7c" d="M3.900 4.800H14.800L12.400 11.500H1.500z"/></svg>
<div class="t" style="left:43.5px;top:399.8px;line-height:16px;">Rapport</div>
<svg style="left:25px;top:422.5px;" width="6" height="10" viewBox="0 0 6 10"><path fill="#fff" d="M.5 .5L5.500 5L.5 9.500z"/></svg>
<div style="left:32px;top:427px;width:6px;height:1px;background:#fff;"></div>
<svg style="left:38.3px;top:420.5px;" width="16" height="14" viewBox="0 0 16 14"><path fill="#fff" d="M1 .8h11l3.500 5.700L12 12.200H1z"/><circle cx="12.600" cy="6.500" r="1" fill="#47a8e4"/><ellipse cx="5" cy="7.200" rx="4.800" ry="4.600" fill="#fff" stroke="#47a8e4" stroke-width=".8"/><path fill="#fff" d="M3 11h4.500v2.400H3z"/><path fill="none" stroke="#47a8e4" stroke-width=".8" d="M2 6q3-3 6-1"/></svg>
<div class="t" style="left:59.5px;top:419.8px;line-height:16px;color:#fff;">new</div>
<svg style="left:92px;top:421px;" width="12" height="12" viewBox="0 0 12 12"><circle cx="6" cy="6" r="5.200" fill="none" stroke="#fff" stroke-width="1.300"/><path fill="none" stroke="#fff" stroke-width="1.200" d="M6 3.200V6.400H8.600"/></svg>
<div class="t" style="left:0px;top:419.8px;line-height:16px;left:auto;right:1561.5px;color:#fff;">12</div>
<svg style="left:25px;top:442.5px;" width="6" height="10" viewBox="0 0 6 10"><path fill="#8fa3b7" d="M.5 .5L5.500 5L.5 9.500z"/></svg>
<div style="left:32px;top:447px;width:6px;height:1px;background:#c9d3dc;"></div>
<svg style="left:38.3px;top:440.5px;" width="16" height="14" viewBox="0 0 16 14"><path fill="#7d93a8" d="M1 .8h11l3.500 5.700L12 12.200H1z"/><circle cx="12.600" cy="6.500" r="1" fill="#fff"/><ellipse cx="5" cy="7.200" rx="4.800" ry="4.600" fill="#4f6072" stroke="#fff" stroke-width=".8"/><path fill="#4f6072" d="M3 11h4.500v2.400H3z"/><path fill="none" stroke="#fff" stroke-width=".8" d="M2 6q3-3 6-1"/></svg>
<div class="t" style="left:59.5px;top:439.8px;line-height:16px;">new 1</div>
<svg style="left:102px;top:441px;" width="12" height="12" viewBox="0 0 12 12"><circle cx="6" cy="6" r="5.200" fill="none" stroke="#48596b" stroke-width="1.300"/><path fill="none" stroke="#48596b" stroke-width="1.200" d="M6 3.200V6.400H8.600"/></svg>
<div class="t" style="left:0px;top:439.8px;line-height:16px;left:auto;right:1561.5px;">0</div>
<svg style="left:25px;top:462.5px;" width="6" height="10" viewBox="0 0 6 10"><path fill="#8fa3b7" d="M.5 .5L5.500 5L.5 9.500z"/></svg>
<div style="left:32px;top:467px;width:6px;height:1px;background:#c9d3dc;"></div>
<svg style="left:38.3px;top:460.5px;" width="16" height="14" viewBox="0 0 16 14"><path fill="#7d93a8" d="M1 .8h11l3.500 5.700L12 12.200H1z"/><circle cx="12.600" cy="6.500" r="1" fill="#fff"/><rect x="0" y="7" width="9.600" height="5.400" rx=".8" fill="#4f6072" stroke="#fff" stroke-width=".9"/><rect x="1.800" y="8.600" width="1.200" height="1" fill="#fff"/><rect x="3.800" y="8.600" width="1.200" height="1" fill="#fff"/></svg>
<div class="t" style="left:59.5px;top:459.8px;line-height:16px;">Nombre Pots</div>
<svg style="left:142px;top:461px;" width="12" height="12" viewBox="0 0 12 12"><circle cx="6" cy="6" r="5.200" fill="none" stroke="#48596b" stroke-width="1.300"/><path fill="none" stroke="#48596b" stroke-width="1.200" d="M6 3.200V6.400H8.600"/></svg>
<svg style="left:25px;top:482.5px;" width="6" height="10" viewBox="0 0 6 10"><path fill="#8fa3b7" d="M.5 .5L5.500 5L.5 9.500z"/></svg>
<div style="left:32px;top:487px;width:6px;height:1px;background:#c9d3dc;"></div>
<svg style="left:38.3px;top:480.5px;" width="16" height="14" viewBox="0 0 16 14"><path fill="#7d93a8" d="M1 .8h11l3.500 5.700L12 12.200H1z"/><circle cx="12.600" cy="6.500" r="1" fill="#fff"/><text x=".5" y="10.500" font-family="Liberation Serif,serif" font-style="italic" font-weight="bold" font-size="9.500" fill="#4f6072" stroke="#fff" stroke-width=".25">fx</text></svg>
<div class="t" style="left:59.5px;top:479.8px;line-height:16px;">Objectif</div>
<svg style="left:112px;top:481px;" width="12" height="12" viewBox="0 0 12 12"><circle cx="6" cy="6" r="5.200" fill="none" stroke="#48596b" stroke-width="1.300"/><path fill="none" stroke="#48596b" stroke-width="1.200" d="M6 3.200V6.400H8.600"/></svg>
<svg style="left:25px;top:502.5px;" width="6" height="10" viewBox="0 0 6 10"><path fill="#8fa3b7" d="M.5 .5L5.500 5L.5 9.500z"/></svg>
<div style="left:32px;top:507px;width:6px;height:1px;background:#c9d3dc;"></div>
<svg style="left:38.3px;top:500.5px;" width="16" height="14" viewBox="0 0 16 14"><path fill="#7d93a8" d="M1 .8h11l3.500 5.700L12 12.200H1z"/><circle cx="12.600" cy="6.500" r="1" fill="#fff"/><rect x="0" y="7" width="9.600" height="5.400" rx=".8" fill="#4f6072" stroke="#fff" stroke-width=".9"/><rect x="1.800" y="8.600" width="1.200" height="1" fill="#fff"/><rect x="3.800" y="8.600" width="1.200" height="1" fill="#fff"/></svg>
<div class="t" style="left:59.5px;top:499.8px;line-height:16px;">Pert kg</div>
<svg style="left:107.5px;top:501px;" width="12" height="12" viewBox="0 0 12 12"><circle cx="6" cy="6" r="5.200" fill="none" stroke="#48596b" stroke-width="1.300"/><path fill="none" stroke="#48596b" stroke-width="1.200" d="M6 3.200V6.400H8.600"/></svg>
<svg style="left:25px;top:522.5px;" width="6" height="10" viewBox="0 0 6 10"><path fill="#8fa3b7" d="M.5 .5L5.500 5L.5 9.500z"/></svg>
<div style="left:32px;top:527px;width:6px;height:1px;background:#c9d3dc;"></div>
<svg style="left:38.3px;top:520.5px;" width="16" height="14" viewBox="0 0 16 14"><path fill="#7d93a8" d="M1 .8h11l3.500 5.700L12 12.200H1z"/><circle cx="12.600" cy="6.500" r="1" fill="#fff"/><rect x="0" y="7" width="9.600" height="5.400" rx=".8" fill="#4f6072" stroke="#fff" stroke-width=".9"/><rect x="1.800" y="8.600" width="1.200" height="1" fill="#fff"/><rect x="3.800" y="8.600" width="1.200" height="1" fill="#fff"/></svg>
<div class="t" style="left:59.5px;top:519.8px;line-height:16px;">Perte pot</div>
<svg style="left:120px;top:521px;" width="12" height="12" viewBox="0 0 12 12"><circle cx="6" cy="6" r="5.200" fill="none" stroke="#48596b" stroke-width="1.300"/><path fill="none" stroke="#48596b" stroke-width="1.200" d="M6 3.200V6.400H8.600"/></svg>
<svg style="left:25px;top:542.5px;" width="6" height="10" viewBox="0 0 6 10"><path fill="#8fa3b7" d="M.5 .5L5.500 5L.5 9.500z"/></svg>
<div style="left:32px;top:547px;width:6px;height:1px;background:#c9d3dc;"></div>
<svg style="left:38.3px;top:540.5px;" width="16" height="14" viewBox="0 0 16 14"><path fill="#7d93a8" d="M1 .8h11l3.500 5.700L12 12.200H1z"/><circle cx="12.600" cy="6.500" r="1" fill="#fff"/><rect x="0" y="7" width="9.600" height="5.400" rx=".8" fill="#4f6072" stroke="#fff" stroke-width=".9"/><rect x="1.800" y="8.600" width="1.200" height="1" fill="#fff"/><rect x="3.800" y="8.600" width="1.200" height="1" fill="#fff"/></svg>
<div class="t" style="left:59.5px;top:539.8px;line-height:16px;">Poid Ideal</div>
<svg style="left:123.5px;top:541px;" width="12" height="12" viewBox="0 0 12 12"><circle cx="6" cy="6" r="5.200" fill="none" stroke="#48596b" stroke-width="1.300"/><path fill="none" stroke="#48596b" stroke-width="1.200" d="M6 3.200V6.400H8.600"/></svg>
<svg style="left:25px;top:562.5px;" width="6" height="10" viewBox="0 0 6 10"><path fill="#8fa3b7" d="M.5 .5L5.500 5L.5 9.500z"/></svg>
<div style="left:32px;top:567px;width:6px;height:1px;background:#c9d3dc;"></div>
<svg style="left:38.3px;top:560.5px;" width="16" height="14" viewBox="0 0 16 14"><path fill="#7d93a8" d="M1 .8h11l3.500 5.700L12 12.200H1z"/><circle cx="12.600" cy="6.500" r="1" fill="#fff"/><rect x="0" y="7" width="9.600" height="5.400" rx=".8" fill="#4f6072" stroke="#fff" stroke-width=".9"/><rect x="1.800" y="8.600" width="1.200" height="1" fill="#fff"/><rect x="3.800" y="8.600" width="1.200" height="1" fill="#fff"/></svg>
<div class="t" style="left:59.5px;top:559.8px;line-height:16px;">Poid Permet</div>
<svg style="left:137px;top:561px;" width="12" height="12" viewBox="0 0 12 12"><circle cx="6" cy="6" r="5.200" fill="none" stroke="#48596b" stroke-width="1.300"/><path fill="none" stroke="#48596b" stroke-width="1.200" d="M6 3.200V6.400H8.600"/></svg>
<div style="left:39.5px;top:581.5px;width:12.5px;height:1px;background:#7d93a8;"></div>
<div style="left:-1px;top:583px;width:342px;height:13px;background:#c1c6cb;"></div>
<div style="left:-1px;top:584px;width:39px;height:11px;background:#fafafa;"></div>
<svg style="left:2px;top:589.5px" width="1" height="1"><path fill="none" stroke="#55687b" stroke-width="1.3" d="M1.6 -3.2L-1.6 0L1.6 3.2"/></svg>
<svg style="left:166px;top:587px;" width="18" height="5" viewBox="0 0 18 5"><rect x="0" y="0" width="1" height="5" fill="#fff"/><rect x="2" y="0" width="1" height="5" fill="#fff"/><rect x="4" y="0" width="1" height="5" fill="#fff"/><rect x="6" y="0" width="1" height="5" fill="#fff"/><rect x="8" y="0" width="1" height="5" fill="#fff"/><rect x="10" y="0" width="1" height="5" fill="#fff"/><rect x="12" y="0" width="1" height="5" fill="#fff"/><rect x="14" y="0" width="1" height="5" fill="#fff"/><rect x="16" y="0" width="1" height="5" fill="#fff"/></svg>
<svg style="left:154px;top:601px;" width="24" height="5" viewBox="0 0 24 5"><rect x="0" y="0" width="1" height="5" fill="#b4bbc2"/><rect x="2" y="0" width="1" height="5" fill="#b4bbc2"/><rect x="4" y="0" width="1" height="5" fill="#b4bbc2"/><rect x="6" y="0" width="1" height="5" fill="#b4bbc2"/><rect x="8" y="0" width="1" height="5" fill="#b4bbc2"/><rect x="10" y="0" width="1" height="5" fill="#b4bbc2"/><rect x="12" y="0" width="1" height="5" fill="#b4bbc2"/><rect x="14" y="0" width="1" height="5" fill="#b4bbc2"/><rect x="16" y="0" width="1" height="5" fill="#b4bbc2"/><rect x="18" y="0" width="1" height="5" fill="#b4bbc2"/><rect x="20" y="0" width="1" height="5" fill="#b4bbc2"/><rect x="22" y="0" width="1" height="5" fill="#b4bbc2"/></svg>
<div style="left:0px;top:606px;width:341px;height:1px;background:#d5d9dd;"></div>
<div style="left:0px;top:608px;width:341px;height:19px;background:#dde1e5;border-bottom:1px solid #c9cfd5;"></div>
<div class="t" style="left:-7.3px;top:608.5px;line-height:16px;font-size:11px;letter-spacing:-0.085px;">Vision Property Editor</div>
<div style="left:-2px;top:628px;width:21px;height:27px;background:#dde4ec;border:1px solid #b9c3cd;border-radius:2px;"></div>
<svg style="left:-1px;top:634px;" width="12" height="14" viewBox="0 0 12 14"><path stroke="#55687b" stroke-width="1.600" d="M1.800 0v12"/><path fill="#55687b" d="M-1.500 9.500h6.600L1.800 13.500z"/><g stroke="#55687b" stroke-width="1.400"><path d="M6.500 2h5M6.500 5.300h5M6.500 8.600h5M6.500 11.900h5"/></g></svg>
<svg style="left:27px;top:634px;" width="12" height="14" viewBox="0 0 12 14"><path stroke="#55687b" stroke-width="1.500" d="M3 .5v11"/><path fill="#55687b" d="M0 9h6L3 13z"/><text x="6.800" y="6" font-size="6.500" font-weight="bold" fill="#55687b" font-family="Liberation Sans,sans-serif">A</text><text x="6.800" y="13" font-size="6.500" font-weight="bold" fill="#55687b" font-family="Liberation Sans,sans-serif">Z</text></svg>
<div style="left:50px;top:629px;width:1px;height:24px;background:#c9cfd5;"></div>
<svg style="left:62px;top:636px;" width="12" height="10" viewBox="0 0 12 10"><rect x=".6" y=".6" width="10.800" height="8.800" rx=".6" fill="none" stroke="#55687b" stroke-width="1.200"/><path stroke="#55687b" stroke-width="1.100" d="M2.400 3.500h1.600M5 3.500h4.600M2.400 6.500h1.600M5 6.500h4.600"/></svg>
<div style="left:85px;top:629px;width:1px;height:24px;background:#c9cfd5;"></div>
<svg style="left:96px;top:634px;" width="15" height="14" viewBox="0 0 15 14"><g stroke="#55687b" stroke-width="1.600"><path d="M0 3h8.500M0 7h13M0 11h8.500"/></g><path fill="#55687b" d="M8.800 4.400h5.200L11.400 .4z"/><path fill="#55687b" d="M8.800 9.600h5.200L11.400 13.600z"/></svg>
<svg style="left:124px;top:634px;" width="15" height="14" viewBox="0 0 15 14"><g stroke="#55687b" stroke-width="1.600"><path d="M0 3h8.500M0 7h11M0 11h8.500"/></g><path fill="#55687b" d="M8.800 .8h5.400L11.500 5z"/><path fill="#55687b" d="M8.800 13.200h5.400L11.500 9z"/></svg>
<div style="left:148px;top:629px;width:1px;height:24px;background:#c9cfd5;"></div>
<svg style="left:157px;top:635px;" width="14" height="13" viewBox="0 0 14 13"><path stroke="#55687b" stroke-width="1.100" d="M0 .6h10"/><path fill="#55687b" d="M0 2.400h10L6.400 6.800v5.400L3.800 10V6.800z"/><text x="8.200" y="12.400" font-size="7" fill="#55687b" font-family="Liberation Sans,sans-serif">A</text></svg>
<svg style="left:175.5px;top:633.5px;" width="16" height="16" viewBox="0 0 16 16"><path fill="#55687b" d="M5.200 6.600h5.600L8 9.600z"/></svg>
<div style="left:0px;top:658px;width:341px;height:1px;background:#c9cfd5;"></div>
<div style="left:8px;top:660px;width:152px;height:23px;background:#fff;"></div>
<div style="left:162.5px;top:661px;width:126px;height:21.5px;background:transparent;"></div>
<div class="t" style="left:19px;top:664.1px;line-height:16px;">Resizing Allowed</div>
<div style="left:8px;top:684px;width:152px;height:26px;background:#fdfcf3;"></div>
<div style="left:162.5px;top:685px;width:126px;height:24.5px;background:#fdfcf3;"></div>
<div class="t" style="left:19px;top:689.6px;line-height:16px;">Auto-Resize Mode</div>
<div class="t" style="left:164px;top:689.6px;line-height:16px;color:#333;">Subsequent Columns</div>
<div style="left:8px;top:711.5px;width:152px;height:23px;background:#fff;"></div>
<div style="left:162.5px;top:712.5px;width:126px;height:21.5px;background:#fff;"></div>
<div class="t" style="left:19px;top:715.6px;line-height:16px;">Edit Click Count</div>
<div style="left:8px;top:736px;width:152px;height:24px;background:#fdfcf3;"></div>
<div style="left:162.5px;top:737px;width:126px;height:22.5px;background:#fff;"></div>
<div class="t" style="left:19px;top:740.6px;line-height:16px;">Initially Selected Row</div>
<div style="left:8px;top:762px;width:152px;height:24px;background:#fff;"></div>
<div style="left:162.5px;top:763px;width:126px;height:22.5px;background:#fff;"></div>
<div class="t" style="left:19px;top:766.6px;line-height:16px;font-size:12.3px;letter-spacing:0.130px;">Touchscreen Mode</div>
<div class="t" style="left:164px;top:766.6px;line-height:16px;color:#333;">Automatic</div>
<div style="left:8px;top:809px;width:152px;height:24px;background:#47a8e4;"></div>
<div style="left:161.5px;top:809px;width:127px;height:24px;background:#fff;border:1px solid #47a8e4;"></div>
<div class="t" style="left:19px;top:813.6px;line-height:16px;color:#fff;font-weight:bold;">Data</div>
<div class="t" style="left:163px;top:813.6px;line-height:16px;color:#333;font-size:12.3px;letter-spacing:0.200px;">Dataset [8R × 7C]</div>
<div style="left:8px;top:834px;width:152px;height:24px;background:#fdfcf3;"></div>
<div style="left:162.5px;top:835px;width:126px;height:22.5px;background:#fdfcf3;"></div>
<div class="t" style="left:19px;top:838.6px;line-height:16px;font-size:12.3px;letter-spacing:0.160px;">Column Attributes Data</div>
<div class="t" style="left:164px;top:838.6px;line-height:16px;color:#333;font-size:12.3px;letter-spacing:0.198px;">Dataset [7R × 30C]</div>
<div style="left:8px;top:860px;width:152px;height:23px;background:#fff;"></div>
<div style="left:162.5px;top:861px;width:126px;height:21.5px;background:#fff;"></div>
<div class="t" style="left:19px;top:864.1px;line-height:16px;">Selected Column</div>
<div style="left:8px;top:885px;width:152px;height:22px;background:#fdfcf3;"></div>
<div style="left:162.5px;top:886px;width:126px;height:20.5px;background:#fff;"></div>
<div class="t" style="left:19px;top:888.6px;line-height:16px;">Selected Row</div>
<div style="left:8px;top:909px;width:152px;height:23px;background:#fff;"></div>
<div style="left:162.5px;top:910px;width:126px;height:21.5px;background:#fff;"></div>
<div class="t" style="left:19px;top:913.1px;line-height:16px;">Quality</div>
<div class="t" style="left:162.3px;top:913.1px;line-height:16px;color:#333;">Good</div>
<div style="left:165px;top:664.5px;width:14px;height:14px;background:#5badea;border-radius:2.500px;"><svg style="left:2px;top:2.5px;" width="10" height="9" viewBox="0 0 10 9"><path fill="none" stroke="#fff" stroke-width="2" d="M1.200 4.500L3.800 7.200 8.800 1.600"/></svg></div>
<div class="t" style="left:183.5px;top:663.5px;line-height:16px;color:#333;">true</div>
<svg style="left:0px;top:795.5px;" width="6" height="5" viewBox="0 0 6 5"><path fill="#5f6b77" d="M0 0h6L3 4.500z"/></svg>
<div class="t" style="left:9.5px;top:791.5px;line-height:16px;font-weight:bold;color:#8b8b8b;">Data</div>
<svg style="left:52px;top:814px;" width="12" height="13" viewBox="0 0 12 13"><g fill="none" stroke="#c9def0" stroke-width="1.200"><path d="M5.500 1h4v7.500l-4.500 3.500h-4v-3.500h4z"/><path d="M5 8.500h3"/></g></svg>
<div style="left:-1px;top:937px;width:328px;height:7px;overflow:hidden;"><div class="t" style="left:10.5px;top:0.8000000000000007px;line-height:16px;font-weight:bold;color:#8b8b8b;">Appearance</div><svg style="left:1px;top:2.5px;" width="6" height="5" viewBox="0 0 6 5"><path fill="#5f6b77" d="M0 0h6L3 4.500z"/></svg></div>
<svg style="left:334.5px;top:938px" width="1" height="1"><path fill="none" stroke="#55687b" stroke-width="1.3" d="M-3.2 -1.6L0 1.6L3.2 -1.6"/></svg>
<svg style="left:292px;top:914px;" width="13" height="13" viewBox="0 0 13 13"><path fill="#55687b" d="M.5 12.500l.8-3.300 7-7 2.500 2.500-7 7zM9.200 1.300l1.300-1.200 2.500 2.500-1.200 1.300z"/></svg>
<svg style="left:310px;top:916px;" width="16" height="10" viewBox="0 0 16 10"><g fill="none" stroke="#55687b" stroke-width="1.700"><path d="M7 1.500H4.500a3.500 3.500 0 0 0 0 7H7M9 1.500h2.500a3.500 3.500 0 0 1 0 7H9M5 5h6"/></g></svg>
<div style="left:0px;top:948px;width:1882px;height:14px;background:#fafafa;"></div>
<div style="left:3px;top:958px;width:6px;height:4px;background:#666;"></div>
<div style="left:-1px;top:958px;width:2px;height:4px;background:#666;"></div>
<div class="t" style="left:29px;top:957.0px;line-height:16px;font-weight:bold;font-size:12.5px;color:#111;">Table "Table" (65,96) [604x254]</div>
<div style="left:349px;top:27px;width:1298px;height:895px;background:#efefef;border:3px solid #d5dade;border-bottom:none;"></div>
<div style="left:351px;top:29px;width:1294px;height:1px;background:#c9d0d6;"></div>
<div style="left:364px;top:42px;width:1280px;height:879px;background:#858b8c;"></div>
<div style="left:364px;top:42px;width:800px;height:600px;background:#fafafa;"></div>
<div style="left:363px;top:41px;width:1281px;height:1px;background:#333;"></div>
<div style="left:363px;top:42px;width:1px;height:879px;background:#5a5a5a;"></div>
<svg style="left:352px;top:30px;" width="1292" height="11" viewBox="0 0 1292 11"><path stroke="#2e2e2e" stroke-width=".9" d="M22.5 9V11 M32.5 6V11 M42.5 9V11 M52.5 6V11 M62.5 9V11 M72.5 6V11 M82.5 9V11 M92.5 6V11 M102.5 9V11 M112.5 1.2V11 M122.5 9V11 M132.5 6V11 M142.5 9V11 M152.5 6V11 M162.5 9V11 M172.5 6V11 M182.5 9V11 M192.5 6V11 M202.5 9V11 M212.5 1.2V11 M222.5 9V11 M232.5 6V11 M242.5 9V11 M252.5 6V11 M262.5 9V11 M272.5 6V11 M282.5 9V11 M292.5 6V11 M302.5 9V11 M312.5 1.2V11 M322.5 9V11 M332.5 6V11 M342.5 9V11 M352.5 6V11 M362.5 9V11 M372.5 6V11 M382.5 9V11 M392.5 6V11 M402.5 9V11 M412.5 1.2V11 M422.5 9V11 M432.5 6V11 M442.5 9V11 M452.5 6V11 M462.5 9V11 M472.5 6V11 M482.5 9V11 M492.5 6V11 M502.5 9V11 M512.5 1.2V11 M522.5 9V11 M532.5 6V11 M542.5 9V11 M552.5 6V11 M562.5 9V11 M572.5 6V11 M582.5 9V11 M592.5 6V11 M602.5 9V11 M612.5 1.2V11 M622.5 9V11 M632.5 6V11 M642.5 9V11 M652.5 6V11 M662.5 9V11 M672.5 6V11 M682.5 9V11 M692.5 6V11 M702.5 9V11 M712.5 1.2V11 M722.5 9V11 M732.5 6V11 M742.5 9V11 M752.5 6V11 M762.5 9V11 M772.5 6V11 M782.5 9V11 M792.5 6V11 M802.5 9V11 M812.5 1.2V11 M822.5 9V11 M832.5 6V11 M842.5 9V11 M852.5 6V11 M862.5 9V11 M872.5 6V11 M882.5 9V11 M892.5 6V11 M902.5 9V11 M912.5 1.2V11 M922.5 9V11 M932.5 6V11 M942.5 9V11 M952.5 6V11 M962.5 9V11 M972.5 6V11 M982.5 9V11 M992.5 6V11 M1002.5 9V11 M1012.5 1.2V11 M1022.5 9V11 M1032.5 6V11 M1042.5 9V11 M1052.5 6V11 M1062.5 9V11 M1072.5 6V11 M1082.5 9V11 M1092.5 6V11 M1102.5 9V11 M1112.5 1.2V11 M1122.5 9V11 M1132.5 6V11 M1142.5 9V11 M1152.5 6V11 M1162.5 9V11 M1172.5 6V11 M1182.5 9V11 M1192.5 6V11 M1202.5 9V11 M1212.5 1.2V11 M1222.5 9V11 M1232.5 6V11 M1242.5 9V11 M1252.5 6V11 M1262.5 9V11 M1272.5 6V11 M1282.5 9V11 "/></svg>
<div class="t" style="left:466.6px;top:28.500px;font-size:8.300px;line-height:10px;color:#333;">100</div>
<div class="t" style="left:566.6px;top:28.500px;font-size:8.300px;line-height:10px;color:#333;">200</div>
<div class="t" style="left:666.6px;top:28.500px;font-size:8.300px;line-height:10px;color:#333;">300</div>
<div class="t" style="left:766.6px;top:28.500px;font-size:8.300px;line-height:10px;color:#333;">400</div>
<div class="t" style="left:866.6px;top:28.500px;font-size:8.300px;line-height:10px;color:#333;">500</div>
<div class="t" style="left:966.6px;top:28.500px;font-size:8.300px;line-height:10px;color:#333;">600</div>
<div class="t" style="left:1066.6px;top:28.500px;font-size:8.300px;line-height:10px;color:#333;">700</div>
<div class="t" style="left:1166.6px;top:28.500px;font-size:8.300px;line-height:10px;color:#333;">800</div>
<div class="t" style="left:1266.6px;top:28.500px;font-size:8.300px;line-height:10px;color:#333;">900</div>
<div class="t" style="left:1366.6px;top:28.500px;font-size:8.300px;line-height:10px;color:#333;">1000</div>
<div class="t" style="left:1466.6px;top:28.500px;font-size:8.300px;line-height:10px;color:#333;">1100</div>
<div class="t" style="left:1566.6px;top:28.500px;font-size:8.300px;line-height:10px;color:#333;">1200</div>
<svg style="left:352px;top:30px;" width="12" height="891" viewBox="0 0 12 891"><path stroke="#2e2e2e" stroke-width=".9" d="M9 22.5H12 M6 32.5H12 M9 42.5H12 M6 52.5H12 M9 62.5H12 M6 72.5H12 M9 82.5H12 M6 92.5H12 M9 102.5H12 M1 112.5H12 M9 122.5H12 M6 132.5H12 M9 142.5H12 M6 152.5H12 M9 162.5H12 M6 172.5H12 M9 182.5H12 M6 192.5H12 M9 202.5H12 M1 212.5H12 M9 222.5H12 M6 232.5H12 M9 242.5H12 M6 252.5H12 M9 262.5H12 M6 272.5H12 M9 282.5H12 M6 292.5H12 M9 302.5H12 M1 312.5H12 M9 322.5H12 M6 332.5H12 M9 342.5H12 M6 352.5H12 M9 362.5H12 M6 372.5H12 M9 382.5H12 M6 392.5H12 M9 402.5H12 M1 412.5H12 M9 422.5H12 M6 432.5H12 M9 442.5H12 M6 452.5H12 M9 462.5H12 M6 472.5H12 M9 482.5H12 M6 492.5H12 M9 502.5H12 M1 512.5H12 M9 522.5H12 M6 532.5H12 M9 542.5H12 M6 552.5H12 M9 562.5H12 M6 572.5H12 M9 582.5H12 M6 592.5H12 M9 602.5H12 M1 612.5H12 M9 622.5H12 M6 632.5H12 M9 642.5H12 M6 652.5H12 M9 662.5H12 M6 672.5H12 M9 682.5H12 M6 692.5H12 M9 702.5H12 M1 712.5H12 M9 722.5H12 M6 732.5H12 M9 742.5H12 M6 752.5H12 M9 762.5H12 M6 772.5H12 M9 782.5H12 M6 792.5H12 M9 802.5H12 M1 812.5H12 M9 822.5H12 M6 832.5H12 M9 842.5H12 M6 852.5H12 M9 862.5H12 M6 872.5H12 M9 882.5H12 M6 892.5H12 "/></svg>
<div class="t" style="left:354px;top:143.5px;font-size:8.300px;line-height:9px;color:#333;">1</div>
<div class="t" style="left:354px;top:152.5px;font-size:8.300px;line-height:9px;color:#333;">0</div>
<div class="t" style="left:354px;top:161.5px;font-size:8.300px;line-height:9px;color:#333;">0</div>
<div class="t" style="left:354px;top:243.5px;font-size:8.300px;line-height:9px;color:#333;">2</div>
<div class="t" style="left:354px;top:252.5px;font-size:8.300px;line-height:9px;color:#333;">0</div>
<div class="t" style="left:354px;top:261.5px;font-size:8.300px;line-height:9px;color:#333;">0</div>
<div class="t" style="left:354px;top:343.5px;font-size:8.300px;line-height:9px;color:#333;">3</div>
<div class="t" style="left:354px;top:352.5px;font-size:8.300px;line-height:9px;color:#333;">0</div>
<div class="t" style="left:354px;top:361.5px;font-size:8.300px;line-height:9px;color:#333;">0</div>
<div class="t" style="left:354px;top:443.5px;font-size:8.300px;line-height:9px;color:#333;">4</div>
<div class="t" style="left:354px;top:452.5px;font-size:8.300px;line-height:9px;color:#333;">0</div>
<div class="t" style="left:354px;top:461.5px;font-size:8.300px;line-height:9px;color:#333;">0</div>
<div class="t" style="left:354px;top:543.5px;font-size:8.300px;line-height:9px;color:#333;">5</div>
<div class="t" style="left:354px;top:552.5px;font-size:8.300px;line-height:9px;color:#333;">0</div>
<div class="t" style="left:354px;top:561.5px;font-size:8.300px;line-height:9px;color:#333;">0</div>
<div class="t" style="left:354px;top:643.5px;font-size:8.300px;line-height:9px;color:#333;">6</div>
<div class="t" style="left:354px;top:652.5px;font-size:8.300px;line-height:9px;color:#333;">0</div>
<div class="t" style="left:354px;top:661.5px;font-size:8.300px;line-height:9px;color:#333;">0</div>
<div class="t" style="left:354px;top:743.5px;font-size:8.300px;line-height:9px;color:#333;">7</div>
<div class="t" style="left:354px;top:752.5px;font-size:8.300px;line-height:9px;color:#333;">0</div>
<div class="t" style="left:354px;top:761.5px;font-size:8.300px;line-height:9px;color:#333;">0</div>
<div class="t" style="left:354px;top:843.5px;font-size:8.300px;line-height:9px;color:#333;">8</div>
<div class="t" style="left:354px;top:852.5px;font-size:8.300px;line-height:9px;color:#333;">0</div>
<div class="t" style="left:354px;top:861.5px;font-size:8.300px;line-height:9px;color:#333;">0</div>
<svg style="left:1250px;top:35px;" width="8.5" height="4.5" viewBox="0 0 8.5 4.5"><path fill="#111" d="M0 0h8.500L4.250 4.500z"/></svg>
<svg style="left:357px;top:409px;" width="4.5" height="8.5" viewBox="0 0 4.5 8.5"><path fill="#111" d="M0 0v8.500L4.500 4.250z"/></svg>
<div style="left:429px;top:138px;width:604px;height:254px;background:#fff;border:1px solid #d3d8dd;border-right:2px solid #b9c0c7;"></div>
<div style="left:430px;top:139px;width:603px;height:18px;background:linear-gradient(#fff,#fff 40%,#e9edf3);border-bottom:1px solid #b9c0c8;"></div>
<div class="b" style="left:430.0px;top:140.8px;width:86.1px;text-align:center;line-height:16px;color:#2b2b2b;font-size:12.4px;letter-spacing:-0.014px;">Recette</div>
<div class="b" style="left:516.1px;top:140.8px;width:86.1px;text-align:center;line-height:16px;color:#2b2b2b;font-size:12.4px;letter-spacing:-0.180px;">Etape_Transf...</div>
<div class="b" style="left:602.1px;top:140.8px;width:86.1px;text-align:center;line-height:16px;color:#2b2b2b;font-size:12.4px;letter-spacing:0.196px;">Temperatur...</div>
<div class="b" style="left:688.2px;top:140.8px;width:86.1px;text-align:center;line-height:16px;color:#2b2b2b;font-size:12.4px;letter-spacing:0.171px;">Temps Debut</div>
<div class="b" style="left:774.3px;top:140.8px;width:86.1px;text-align:center;line-height:16px;color:#2b2b2b;font-size:12.4px;letter-spacing:0.196px;">Temperatur...</div>
<div class="b" style="left:860.4px;top:140.8px;width:86.1px;text-align:center;line-height:16px;color:#2b2b2b;font-size:12.4px;letter-spacing:0.013px;">Temps Fin</div>
<div class="b" style="left:946.4px;top:140.8px;width:86.1px;text-align:center;line-height:16px;color:#2b2b2b;font-size:12.4px;letter-spacing:-0.207px;">Temps Accu...</div>
<div style="left:430px;top:177px;width:603px;height:1px;background:#c3c9d0;"></div>
<div class="t" style="left:429.0px;width:84.6px;text-align:right;top:159.5px;line-height:16px;color:#333;">5</div>
<div class="t" style="left:515.1px;width:84.6px;text-align:right;top:159.5px;line-height:16px;color:#333;">10</div>
<div class="t" style="left:601.1px;width:84.6px;text-align:right;top:159.5px;line-height:16px;color:#333;">64,31</div>
<div class="t" style="left:689.2142857142858px;top:159.5px;line-height:16px;color:#333;">14:17:29</div>
<div class="t" style="left:773.3px;width:84.6px;text-align:right;top:159.5px;line-height:16px;color:#333;">64,64</div>
<div class="t" style="left:863.6571428571428px;top:159.5px;line-height:16px;color:#333;">14:17:43</div>
<div style="left:430px;top:198px;width:603px;height:1px;background:#c3c9d0;"></div>
<div class="t" style="left:429.0px;width:84.6px;text-align:right;top:180.5px;line-height:16px;color:#333;">6</div>
<div class="t" style="left:515.1px;width:84.6px;text-align:right;top:180.5px;line-height:16px;color:#333;">1</div>
<div class="t" style="left:601.1px;width:84.6px;text-align:right;top:180.5px;line-height:16px;color:#333;">64,86</div>
<div class="t" style="left:689.2142857142858px;top:180.5px;line-height:16px;color:#333;">14:17:57</div>
<div class="t" style="left:773.3px;width:84.6px;text-align:right;top:180.5px;line-height:16px;color:#333;">64,92</div>
<div class="t" style="left:863.6571428571428px;top:180.5px;line-height:16px;color:#333;">14:18:01</div>
<div style="left:430px;top:219px;width:603px;height:1px;background:#c3c9d0;"></div>
<div class="t" style="left:429.0px;width:84.6px;text-align:right;top:201.5px;line-height:16px;color:#333;">7</div>
<div class="t" style="left:515.1px;width:84.6px;text-align:right;top:201.5px;line-height:16px;color:#333;">1</div>
<div class="t" style="left:601.1px;width:84.6px;text-align:right;top:201.5px;line-height:16px;color:#333;">63,09</div>
<div class="t" style="left:689.2142857142858px;top:201.5px;line-height:16px;color:#333;">14:19:21</div>
<div class="t" style="left:773.3px;width:84.6px;text-align:right;top:201.5px;line-height:16px;color:#333;">62,33</div>
<div class="t" style="left:863.6571428571428px;top:201.5px;line-height:16px;color:#333;">14:19:28</div>
<div style="left:430px;top:240px;width:603px;height:1px;background:#c3c9d0;"></div>
<div class="t" style="left:429.0px;width:84.6px;text-align:right;top:222.5px;line-height:16px;color:#333;">8</div>
<div class="t" style="left:515.1px;width:84.6px;text-align:right;top:222.5px;line-height:16px;color:#333;">1</div>
<div class="t" style="left:601.1px;width:84.6px;text-align:right;top:222.5px;line-height:16px;color:#333;">46,14</div>
<div class="t" style="left:689.2142857142858px;top:222.5px;line-height:16px;color:#333;">14:24:22</div>
<div class="t" style="left:773.3px;width:84.6px;text-align:right;top:222.5px;line-height:16px;color:#333;">46,43</div>
<div class="t" style="left:863.6571428571428px;top:222.5px;line-height:16px;color:#333;">14:24:27</div>
<div style="left:430px;top:261px;width:603px;height:1px;background:#c3c9d0;"></div>
<div class="t" style="left:429.0px;width:84.6px;text-align:right;top:243.5px;line-height:16px;color:#333;">9</div>
<div class="t" style="left:515.1px;width:84.6px;text-align:right;top:243.5px;line-height:16px;color:#333;">1</div>
<div class="t" style="left:601.1px;width:84.6px;text-align:right;top:243.5px;line-height:16px;color:#333;">56,9</div>
<div class="t" style="left:689.2142857142858px;top:243.5px;line-height:16px;color:#333;">15:03:56</div>
<div class="t" style="left:773.3px;width:84.6px;text-align:right;top:243.5px;line-height:16px;color:#333;">56,84</div>
<div class="t" style="left:863.6571428571428px;top:243.5px;line-height:16px;color:#333;">15:04:15</div>
<div style="left:430px;top:282px;width:603px;height:1px;background:#c3c9d0;"></div>
<div class="t" style="left:429.0px;width:84.6px;text-align:right;top:264.5px;line-height:16px;color:#333;">10</div>
<div class="t" style="left:515.1px;width:84.6px;text-align:right;top:264.5px;line-height:16px;color:#333;">1</div>
<div class="t" style="left:601.1px;width:84.6px;text-align:right;top:264.5px;line-height:16px;color:#333;">65,08</div>
<div class="t" style="left:689.2142857142858px;top:264.5px;line-height:16px;color:#333;">08:09:05</div>
<div class="t" style="left:773.3px;width:84.6px;text-align:right;top:264.5px;line-height:16px;color:#333;">65,07</div>
<div class="t" style="left:863.6571428571428px;top:264.5px;line-height:16px;color:#333;">08:09:14</div>
<div style="left:430px;top:303px;width:603px;height:1px;background:#c3c9d0;"></div>
<div class="t" style="left:429.0px;width:84.6px;text-align:right;top:285.5px;line-height:16px;color:#333;">11</div>
<div class="t" style="left:515.1px;width:84.6px;text-align:right;top:285.5px;line-height:16px;color:#333;">1</div>
<div class="t" style="left:601.1px;width:84.6px;text-align:right;top:285.5px;line-height:16px;color:#333;">45,81</div>
<div class="t" style="left:689.2142857142858px;top:285.5px;line-height:16px;color:#333;">08:18:40</div>
<div class="t" style="left:773.3px;width:84.6px;text-align:right;top:285.5px;line-height:16px;color:#333;">60,29</div>
<div class="t" style="left:863.6571428571428px;top:285.5px;line-height:16px;color:#333;">08:24:33</div>
<div style="left:430px;top:324px;width:603px;height:1px;background:#c3c9d0;"></div>
<div class="t" style="left:429.0px;width:84.6px;text-align:right;top:306.5px;line-height:16px;color:#333;">12</div>
<div class="t" style="left:515.1px;width:84.6px;text-align:right;top:306.5px;line-height:16px;color:#333;">0</div>
<div class="t" style="left:601.1px;width:84.6px;text-align:right;top:306.5px;line-height:16px;color:#333;">60,75</div>
<div class="t" style="left:689.2142857142858px;top:306.5px;line-height:16px;color:#333;">08:24:58</div>
<div style="left:515px;top:157px;width:1px;height:168px;background:#c3c9d0;"></div>
<div style="left:601px;top:157px;width:1px;height:168px;background:#c3c9d0;"></div>
<div style="left:687px;top:157px;width:1px;height:168px;background:#c3c9d0;"></div>
<div style="left:773px;top:157px;width:1px;height:168px;background:#c3c9d0;"></div>
<div style="left:859px;top:157px;width:1px;height:168px;background:#c3c9d0;"></div>
<div style="left:945px;top:157px;width:1px;height:168px;background:#c3c9d0;"></div>
<div style="left:1032px;top:157px;width:1px;height:168px;background:#c3c9d0;"></div>
<svg style="left:428px;top:137px;" width="606" height="256" viewBox="0 0 606 256"><rect x=".5" y=".5" width="605" height="255" fill="none" stroke="#333" stroke-width="1" stroke-dasharray="4.600 5.400"/></svg>
<svg style="left:418px;top:127px;" width="10" height="10" viewBox="0 0 10 10"><g ><path d="M0.5 0.5L6.8 0.5L5 2.3L8 5.3L9.5 3.6L9.5 9.5L3.6 9.5L5.3 8L2.3 5L0.5 6.8z" fill="none" stroke="#fdfdfd" stroke-width="3" stroke-linejoin="round"/><path d="M0.5 0.5L6.8 0.5L5 2.3L8 5.3L9.5 3.6L9.5 9.5L3.6 9.5L5.3 8L2.3 5L0.5 6.8z" fill="#858585" stroke="#000" stroke-width="1.100" stroke-linejoin="miter"/></g></svg>
<svg style="left:1033.3px;top:127px;" width="10" height="10" viewBox="0 0 10 10"><g transform="translate(10,0) scale(-1,1)"><path d="M0.5 0.5L6.8 0.5L5 2.3L8 5.3L9.5 3.6L9.5 9.5L3.6 9.5L5.3 8L2.3 5L0.5 6.8z" fill="none" stroke="#fdfdfd" stroke-width="3" stroke-linejoin="round"/><path d="M0.5 0.5L6.8 0.5L5 2.3L8 5.3L9.5 3.6L9.5 9.5L3.6 9.5L5.3 8L2.3 5L0.5 6.8z" fill="#858585" stroke="#000" stroke-width="1.100" stroke-linejoin="miter"/></g></svg>
<svg style="left:418px;top:392.3px;" width="10" height="10" viewBox="0 0 10 10"><g transform="translate(10,0) scale(-1,1)"><path d="M0.5 0.5L6.8 0.5L5 2.3L8 5.3L9.5 3.6L9.5 9.5L3.6 9.5L5.3 8L2.3 5L0.5 6.8z" fill="none" stroke="#fdfdfd" stroke-width="3" stroke-linejoin="round"/><path d="M0.5 0.5L6.8 0.5L5 2.3L8 5.3L9.5 3.6L9.5 9.5L3.6 9.5L5.3 8L2.3 5L0.5 6.8z" fill="#858585" stroke="#000" stroke-width="1.100" stroke-linejoin="miter"/></g></svg>
<svg style="left:1033.3px;top:392.3px;" width="10" height="10" viewBox="0 0 10 10"><g ><path d="M0.5 0.5L6.8 0.5L5 2.3L8 5.3L9.5 3.6L9.5 9.5L3.6 9.5L5.3 8L2.3 5L0.5 6.8z" fill="none" stroke="#fdfdfd" stroke-width="3" stroke-linejoin="round"/><path d="M0.5 0.5L6.8 0.5L5 2.3L8 5.3L9.5 3.6L9.5 9.5L3.6 9.5L5.3 8L2.3 5L0.5 6.8z" fill="#858585" stroke="#000" stroke-width="1.100" stroke-linejoin="miter"/></g></svg>
<svg style="left:726px;top:124.4px;" width="10" height="13" viewBox="0 0 10 13"><g ><path d="M5 0.4L0.6 4.6L3.3 4.6L3.3 8.4L0.6 8.4L5 12.6L9.4 8.4L6.7 8.4L6.7 4.6L9.4 4.6z" fill="none" stroke="#fdfdfd" stroke-width="3" stroke-linejoin="round"/><path d="M5 0.4L0.6 4.6L3.3 4.6L3.3 8.4L0.6 8.4L5 12.6L9.4 8.4L6.7 8.4L6.7 4.6L9.4 4.6z" fill="#858585" stroke="#000" stroke-width="1.100" stroke-linejoin="miter"/></g></svg>
<svg style="left:726px;top:392.6px;" width="10" height="13" viewBox="0 0 10 13"><g ><path d="M5 0.4L0.6 4.6L3.3 4.6L3.3 8.4L0.6 8.4L5 12.6L9.4 8.4L6.7 8.4L6.7 4.6L9.4 4.6z" fill="none" stroke="#fdfdfd" stroke-width="3" stroke-linejoin="round"/><path d="M5 0.4L0.6 4.6L3.3 4.6L3.3 8.4L0.6 8.4L5 12.6L9.4 8.4L6.7 8.4L6.7 4.6L9.4 4.6z" fill="#858585" stroke="#000" stroke-width="1.100" stroke-linejoin="miter"/></g></svg>
<svg style="left:415px;top:260.4px;" width="13" height="10" viewBox="0 0 13 10"><g ><path d="M0.4 5L4.6 0.6L4.6 3.3L8.4 3.3L8.4 0.6L12.6 5L8.4 9.4L8.4 6.7L4.6 6.7L4.6 9.4z" fill="none" stroke="#fdfdfd" stroke-width="3" stroke-linejoin="round"/><path d="M0.4 5L4.6 0.6L4.6 3.3L8.4 3.3L8.4 0.6L12.6 5L8.4 9.4L8.4 6.7L4.6 6.7L4.6 9.4z" fill="#858585" stroke="#000" stroke-width="1.100" stroke-linejoin="miter"/></g></svg>
<svg style="left:1034px;top:260.4px;" width="13" height="10" viewBox="0 0 13 10"><g ><path d="M0.4 5L4.6 0.6L4.6 3.3L8.4 3.3L8.4 0.6L12.6 5L8.4 9.4L8.4 6.7L4.6 6.7L4.6 9.4z" fill="none" stroke="#fdfdfd" stroke-width="3" stroke-linejoin="round"/><path d="M0.4 5L4.6 0.6L4.6 3.3L8.4 3.3L8.4 0.6L12.6 5L8.4 9.4L8.4 6.7L4.6 6.7L4.6 9.4z" fill="#858585" stroke="#000" stroke-width="1.100" stroke-linejoin="miter"/></g></svg>
<div style="left:349px;top:921px;width:1298px;height:1px;background:#f2f3f4;"></div>
<div style="left:349px;top:922.6px;width:1298px;height:24px;background:#dde1e5;"></div>
<svg style="left:361px;top:927px;" width="14" height="14" viewBox="0 0 14 14"><g fill="none" stroke="#f58220" stroke-width="1.200"><path d="M.6 3.500V.6H3.500M10.500 .6h2.900v2.900M13.400 10.500v2.900h-2.900M3.500 13.400H.6V10.500"/></g><path fill="none" stroke="#37495a" stroke-width="1.300" d="M.8 7Q7 -.5 13.200 7 7 14.500 .8 7z"/><circle cx="7" cy="7" r="2.100" fill="#f58220"/></svg>
<div style="left:384px;top:923px;width:104px;height:22.8px;background:#fff;border-top:3px solid #47a8e4;"></div>
<svg style="left:391px;top:927px;" width="14" height="14" viewBox="0 0 14 14"><rect x=".6" y=".6" width="12.800" height="12.800" rx="1.200" fill="#fff" stroke="#37495a" stroke-width="1.200"/><path fill="#37495a" d="M.6 1.800q0-1.200 1.200-1.200h10.400q1.200 0 1.200 1.200V4H.6z"/><rect x="2" y="1.600" width="1.500" height="1.300" fill="#f58220"/><rect x="4.400" y="1.600" width="1.500" height="1.300" fill="#f58220"/></svg>
<div class="b" style="left:410.3px;top:926.8px;line-height:16px;font-size:12.6px;letter-spacing:0.198px;">tebleaux</div>
<svg style="left:474px;top:930.5px;" width="8" height="8" viewBox="0 0 8 8"><path stroke="#222" stroke-width="1.500" d="M.5 .5l7 7M7.500 .5l-7 7"/></svg>
<svg style="left:1648px;top:468px;" width="4" height="22" viewBox="0 0 4 22"><rect x="0" y="0" width="4" height="1" fill="#b4bbc2"/><rect x="0" y="2" width="4" height="1" fill="#b4bbc2"/><rect x="0" y="4" width="4" height="1" fill="#b4bbc2"/><rect x="0" y="6" width="4" height="1" fill="#b4bbc2"/><rect x="0" y="8" width="4" height="1" fill="#b4bbc2"/><rect x="0" y="10" width="4" height="1" fill="#b4bbc2"/><rect x="0" y="12" width="4" height="1" fill="#b4bbc2"/><rect x="0" y="14" width="4" height="1" fill="#b4bbc2"/><rect x="0" y="16" width="4" height="1" fill="#b4bbc2"/><rect x="0" y="18" width="4" height="1" fill="#b4bbc2"/><rect x="0" y="20" width="4" height="1" fill="#b4bbc2"/></svg>
<svg style="left:344px;top:468px;" width="4" height="22" viewBox="0 0 4 22"><rect x="0" y="0" width="4" height="1" fill="#b4bbc2"/><rect x="0" y="2" width="4" height="1" fill="#b4bbc2"/><rect x="0" y="4" width="4" height="1" fill="#b4bbc2"/><rect x="0" y="6" width="4" height="1" fill="#b4bbc2"/><rect x="0" y="8" width="4" height="1" fill="#b4bbc2"/><rect x="0" y="10" width="4" height="1" fill="#b4bbc2"/><rect x="0" y="12" width="4" height="1" fill="#b4bbc2"/><rect x="0" y="14" width="4" height="1" fill="#b4bbc2"/><rect x="0" y="16" width="4" height="1" fill="#b4bbc2"/><rect x="0" y="18" width="4" height="1" fill="#b4bbc2"/><rect x="0" y="20" width="4" height="1" fill="#b4bbc2"/></svg>
<div style="left:1653px;top:27px;width:226px;height:919px;background:#fafafa;border:2px solid #d5dade;border-bottom:none;"></div>
<div style="left:1655px;top:29px;width:222px;height:18px;background:#dde1e5;border-bottom:1px solid #c9cfd5;"></div>
<div class="t" style="left:1658.7px;top:29.700000000000003px;line-height:16px;font-size:11px;letter-spacing:-0.169px;">Component Palette</div>
<svg style="left:1826px;top:33px;" width="11" height="11" viewBox="0 0 11 11"><path fill="none" stroke="#55687b" stroke-width="1.200" d="M3.200 3V.800h7v6.400H8"/><rect x=".6" y="3.400" width="7" height="6.400" fill="none" stroke="#55687b" stroke-width="1.200"/><rect x="0" y="2.800" width="8.200" height="1.600" fill="#55687b"/></svg><div style="left:1845px;top:41px;width:8px;height:2px;background:#55687b;"></div><svg style="left:1862px;top:33px;" width="10" height="10" viewBox="0 0 10 10"><path stroke="#55687b" stroke-width="1.300" d="M.5 .5l9 9M9.500 .5l-9 9"/></svg>
<svg style="left:1661px;top:56px;" width="16" height="15" viewBox="0 0 16 15"><path fill="#55687b" d="M.6 7.600A7.400 7 0 0 1 15.400 7.600v.8H.6z"/><path fill="#55687b" d="M.8 9.500l6 1.500v1.800l-6 1.900zM15.200 9.500l-6 1.500v1.800l6 1.900z"/><rect x="6.600" y="8" width="2.800" height="4.500" fill="#55687b"/><path fill="#fafafa" d="M5.200 8.400h5.600v1.400H5.200z"/></svg>
<div style="left:1686px;top:52px;width:1px;height:23px;background:#c9cfd5;"></div>
<svg style="left:1696.5px;top:57px;" width="15" height="14" viewBox="0 0 15 14"><g stroke="#55687b" stroke-width="1.600"><path d="M0 3h8.500M0 7h13M0 11h8.500"/></g><path fill="#55687b" d="M8.800 4.400h5.200L11.400 .4z"/><path fill="#55687b" d="M8.800 9.600h5.200L11.400 13.600z"/></svg>
<svg style="left:1724.5px;top:57px;" width="15" height="14" viewBox="0 0 15 14"><g stroke="#55687b" stroke-width="1.600"><path d="M0 3h8.500M0 7h11M0 11h8.500"/></g><path fill="#55687b" d="M8.800 .8h5.400L11.500 5z"/><path fill="#55687b" d="M8.800 13.200h5.400L11.500 9z"/></svg>
<div style="left:1749px;top:52px;width:1px;height:23px;background:#c9cfd5;"></div>
<div style="left:1753px;top:50px;width:124px;height:28px;background:#fff;border:1px solid #c3c9cf;border-radius:2px;"></div>
<svg style="left:1762px;top:57.5px;" width="18" height="14" viewBox="0 0 18 14"><circle cx="5.200" cy="5.600" r="4" fill="none" stroke="#8e9499" stroke-width="1.900"/><path stroke="#8e9499" stroke-width="2.300" stroke-linecap="round" d="M8.200 8.800L11.400 12.300"/><path fill="#8e9499" d="M12.400 6.400h4.400L14.600 8.800z"/></svg>
<div class="t" style="left:1785.5px;top:56.0px;line-height:16px;color:#b4bcc5;">Filter</div>
<div style="left:1655px;top:80px;width:222px;height:865px;background:#fafafa;border:1px solid #c3c9cf;border-bottom:none;"></div>
<div style="left:1864px;top:80.5px;width:12px;height:863.5px;background:#fafafa;border-left:1px solid #d5d9dd;"></div><div style="left:1865px;top:94px;width:11px;height:275px;background:#b9bec3;"></div><svg style="left:1870.5px;top:89.0px" width="1" height="1"><path fill="none" stroke="#55687b" stroke-width="1.3" d="M-3.2 1.6L0 -1.6L3.2 1.6"/></svg><svg style="left:1870.5px;top:936.5px" width="1" height="1"><path fill="none" stroke="#55687b" stroke-width="1.3" d="M-3.2 -1.6L0 1.6L3.2 -1.6"/></svg><div style="left:1868px;top:223.5px;width:5px;height:1px;background:#fff;"></div><div style="left:1868px;top:225.5px;width:5px;height:1px;background:#fff;"></div><div style="left:1868px;top:227.5px;width:5px;height:1px;background:#fff;"></div><div style="left:1868px;top:229.5px;width:5px;height:1px;background:#fff;"></div><div style="left:1868px;top:231.5px;width:5px;height:1px;background:#fff;"></div><div style="left:1868px;top:233.5px;width:5px;height:1px;background:#fff;"></div><div style="left:1868px;top:235.5px;width:5px;height:1px;background:#fff;"></div><div style="left:1868px;top:237.5px;width:5px;height:1px;background:#fff;"></div><div style="left:1868px;top:239.5px;width:5px;height:1px;background:#fff;"></div>
<div style="left:1656px;top:82px;width:207px;height:24px;background:#e4e8ed;"></div>
<svg style="left:1662px;top:91.5px;" width="9" height="5" viewBox="0 0 9 5"><path fill="#55687b" d="M0 0h8.500L4.250 5z"/></svg>
<div class="t" style="left:1678px;top:86.5px;line-height:16px;font-size:13.500px;color:#2a2d30;">Input</div>
<svg style="left:1683px;top:116px;" width="16" height="12" viewBox="0 0 16 12"><rect x=".5" y="2.500" width="13" height="7" fill="#fff" stroke="#555" stroke-width="1"/><text x="5.5" y="8.3" font-family="Liberation Sans,sans-serif" font-size="5.5" font-weight="bold" fill="#333" >a|</text></svg>
<div class="b" style="left:1702.5px;top:114.7px;line-height:16px;color:#6c7580;font-size:12.5px;letter-spacing:0.099px;">Text Field</div>
<svg style="left:1683px;top:147px;" width="16" height="12" viewBox="0 0 16 12"><rect x=".5" y="2.500" width="13" height="7" fill="#fff" stroke="#555" stroke-width="1"/><text x="3" y="8.5" font-family="Liberation Sans,sans-serif" font-size="6" font-weight="bold" fill="#333" >12</text></svg>
<div class="b" style="left:1702.5px;top:145.7px;line-height:16px;color:#6c7580;font-size:12.5px;letter-spacing:0.133px;">Numeric Text Field</div>
<svg style="left:1683px;top:178px;" width="16" height="12" viewBox="0 0 16 12"><rect x=".5" y="2.500" width="13" height="7" fill="#fff" stroke="#555" stroke-width="1"/><rect x="9" y="3" width="4" height="6" fill="#555"/><path fill="#fff" d="M10 5.500h2l-1-1.500zM10 6.500h2l-1 1.500z"/></svg>
<div class="b" style="left:1702.5px;top:176.7px;line-height:16px;color:#6c7580;font-size:12.5px;letter-spacing:0.053px;">Spinner</div>
<svg style="left:1683px;top:209px;" width="16" height="12" viewBox="0 0 16 12"><rect x=".5" y="2.500" width="13" height="7" fill="#fff" stroke="#888" stroke-width="1"/><path stroke="#333" stroke-width="1" stroke-dasharray="1.500 1" d="M3 6.500h7"/></svg>
<div class="b" style="left:1702.5px;top:207.7px;line-height:16px;color:#6c7580;font-size:12.5px;letter-spacing:0.115px;">Formatted Text Field</div>
<svg style="left:1683px;top:240px;" width="16" height="12" viewBox="0 0 16 12"><rect x=".5" y="2.500" width="13" height="7" fill="#fff" stroke="#555" stroke-width="1"/><circle cx="4" cy="6" r="1" fill="#222"/><circle cx="7" cy="6" r="1" fill="#222"/><circle cx="10" cy="6" r="1" fill="#222"/></svg>
<div class="b" style="left:1702.5px;top:238.7px;line-height:16px;color:#6c7580;font-size:12.5px;letter-spacing:-0.171px;">Password Field</div>
<svg style="left:1683px;top:271px;" width="16" height="12" viewBox="0 0 16 12"><rect x="1" y=".2" width="11.600" height="11.600" fill="#fff" stroke="#333" stroke-width="1"/><text x="2.6" y="8" font-family="Liberation Sans,sans-serif" font-size="6.5" font-weight="bold" fill="#222" >+x</text></svg>
<div class="b" style="left:1702.5px;top:269.7px;line-height:16px;color:#6c7580;font-size:12.5px;letter-spacing:0.036px;">Text Area</div>
<svg style="left:1683px;top:302px;" width="16" height="12" viewBox="0 0 16 12"><rect x=".5" y="2.500" width="13" height="7" fill="#fff" stroke="#555" stroke-width="1"/><rect x="9" y="3" width="4" height="6" fill="#555"/><path fill="#fff" d="M10 5h2l-1 2z"/></svg>
<div class="b" style="left:1702.5px;top:300.7px;line-height:16px;color:#6c7580;font-size:12.5px;letter-spacing:-0.052px;">Dropdown List</div>
<svg style="left:1683px;top:333px;" width="16" height="12" viewBox="0 0 16 12"><path stroke="#444" stroke-width="1.200" d="M.5 6h13"/><path stroke="#444" stroke-width="1" d="M1 4v4M13 4v4"/><path fill="#7a6fc0" stroke="#333" stroke-width=".8" d="M4.500 3h5v4L7 9.500 4.500 7z"/></svg>
<div class="b" style="left:1702.5px;top:331.7px;line-height:16px;color:#6c7580;font-size:12.5px;letter-spacing:0.028px;">Slider</div>
<svg style="left:1683px;top:364px;" width="16" height="12" viewBox="0 0 16 12"><circle cx="7" cy="6" r="7.600" fill="#555"/><g fill="none" stroke="#ddd" stroke-width=".7"><ellipse cx="7" cy="6" rx="3.500" ry="7.600"/><path d="M-.6 6h15.200M7 -1.600v15.200M.8 2.200h12.400M.8 9.800h12.400"/></g></svg>
<div class="b" style="left:1702.5px;top:362.7px;line-height:16px;color:#6c7580;font-size:12.5px;letter-spacing:-0.031px;">Language Selector</div>
<div style="left:1656px;top:386px;width:207px;height:24px;background:#e4e8ed;"></div>
<svg style="left:1662px;top:395.5px;" width="9" height="5" viewBox="0 0 9 5"><path fill="#55687b" d="M0 0h8.500L4.250 5z"/></svg>
<div class="t" style="left:1678px;top:390.5px;line-height:16px;font-size:13.500px;color:#2a2d30;">Buttons</div>
<svg style="left:1683px;top:420px;" width="16" height="12" viewBox="0 0 16 12"><rect x=".5" y="1.500" width="14" height="8.500" rx="2" fill="#f4f4f2" stroke="#8c8984" stroke-width="1"/><text x="4" y="8" font-family="Liberation Sans,sans-serif" font-size="5" font-weight="bold" fill="#333" >OK</text></svg>
<div class="b" style="left:1702.5px;top:418.7px;line-height:16px;color:#6c7580;font-size:12.5px;letter-spacing:0.024px;">Button</div>
<svg style="left:1683px;top:451px;" width="16" height="12" viewBox="0 0 16 12"><rect x="1" y="2" width="12.500" height="8.500" fill="#e0121c"/><path fill="#0fae1a" d="M13.500 2v8.500H4z"/><path stroke="#111" stroke-width="1.600" d="M4.500 10L12.500 3"/><text x="2" y="8.5" font-family="Liberation Sans,sans-serif" font-size="5" font-weight="bold" fill="#fff" >OF</text></svg>
<div class="b" style="left:1702.5px;top:449.7px;line-height:16px;color:#6c7580;font-size:12.5px;letter-spacing:0.044px;">2-State Toggle</div>
<svg style="left:1683px;top:482px;" width="16" height="12" viewBox="0 0 16 12"><rect x="4.500" y="3.500" width="5" height="5" fill="#e0121c"/><text x="0" y="8" font-family="Liberation Sans,sans-serif" font-size="4" font-weight="bold" fill="#333" >A</text><text x="10.5" y="8" font-family="Liberation Sans,sans-serif" font-size="4" font-weight="bold" fill="#333" >A</text></svg>
<div class="b" style="left:1702.5px;top:480.7px;line-height:16px;color:#6c7580;font-size:12.5px;letter-spacing:0.172px;">Multi-State Button</div>
<svg style="left:1683px;top:513px;" width="16" height="12" viewBox="0 0 16 12"><rect x=".5" y="1.500" width="13" height="9" fill="#eee" stroke="#777" stroke-width="1"/><path fill="#f07a18" d="M4 3.500l6 2-2 1 2 2.500-1 .8-2-2.500-1.500 1.500z"/></svg>
<div class="b" style="left:1702.5px;top:511.70000000000005px;line-height:16px;color:#6c7580;font-size:12.5px;letter-spacing:-0.051px;">One-Shot Button</div>
<svg style="left:1683px;top:544px;" width="16" height="12" viewBox="0 0 16 12"><rect x=".5" y="1.500" width="14" height="9" rx="1" fill="#eee" stroke="#777" stroke-width="1"/><path fill="#e8a060" stroke="#733" stroke-width=".5" d="M7 4.500h1.500v2.500h2v3H7z"/></svg>
<div class="b" style="left:1702.5px;top:542.7px;line-height:16px;color:#6c7580;font-size:12.5px;letter-spacing:0.112px;">Momentary Button</div>
<svg style="left:1683px;top:575px;" width="16" height="12" viewBox="0 0 16 12"><rect x=".5" y="1.500" width="14.500" height="8.500" rx="1.500" fill="#c9c9c9" stroke="#777" stroke-width="1"/><text x="4" y="8" font-family="Liberation Sans,sans-serif" font-size="5" font-weight="bold" fill="#333" >ON</text></svg>
<div class="b" style="left:1702.5px;top:573.7px;line-height:16px;color:#6c7580;font-size:12.5px;letter-spacing:0.034px;">Toggle Button</div>
<svg style="left:1683px;top:606px;" width="16" height="12" viewBox="0 0 16 12"><rect x="1.500" y="2.500" width="5" height="5" fill="#fff" stroke="#555" stroke-width=".9"/><path fill="none" stroke="#222" stroke-width="1" d="M2.500 5l1.300 1.500 2.200-3"/><path stroke="#222" stroke-width="1.600" d="M8.500 5.500h4.500"/></svg>
<div class="b" style="left:1702.5px;top:604.7px;line-height:16px;color:#6c7580;font-size:12.5px;letter-spacing:-0.445px;">Check Box</div>
<svg style="left:1683px;top:637px;" width="16" height="12" viewBox="0 0 16 12"><circle cx="4" cy="5.500" r="2.600" fill="#ddd" stroke="#999" stroke-width=".9"/><circle cx="4" cy="5.500" r="1.100" fill="#555"/><path stroke="#222" stroke-width="1.600" d="M8.500 5.500h4.500"/></svg>
<div class="b" style="left:1702.5px;top:635.7px;line-height:16px;color:#6c7580;font-size:12.5px;letter-spacing:-0.104px;">Radio Button</div>
<svg style="left:1683px;top:668px;" width="16" height="12" viewBox="0 0 16 12"><path fill="#f2e7a8" stroke="#6b6030" stroke-width=".9" d="M1 7V3.500h5V7"/><path fill="none" stroke="#444" stroke-width="1" d="M.5 7.500h13M7 7.500V5h6v2.500"/></svg>
<div class="b" style="left:1702.5px;top:666.7px;line-height:16px;color:#6c7580;font-size:12.5px;letter-spacing:-0.015px;">Tab Strip</div>
<div style="left:1656px;top:690px;width:207px;height:24px;background:#e4e8ed;"></div>
<svg style="left:1662px;top:699.5px;" width="9" height="5" viewBox="0 0 9 5"><path fill="#55687b" d="M0 0h8.500L4.250 5z"/></svg>
<div class="t" style="left:1678px;top:694.5px;line-height:16px;font-size:13.500px;color:#2a2d30;">Display</div>
<svg style="left:1683px;top:724px;" width="16" height="12" viewBox="0 0 16 12"><text x="1.5" y="8" font-family="Liberation Sans,sans-serif" font-size="5" font-weight="bold" fill="#335" >label</text></svg>
<div class="b" style="left:1702.5px;top:722.7px;line-height:16px;color:#6c7580;font-size:12.5px;letter-spacing:-0.129px;">Label</div>
<svg style="left:1683px;top:755px;" width="16" height="12" viewBox="0 0 16 12"><rect x=".5" y="1.500" width="14.500" height="8.500" fill="#ddd" stroke="#aaa" stroke-width="1"/><text x="4.5" y="8.5" font-family="Liberation Sans,sans-serif" font-size="5.5" font-weight="bold" fill="#111" >0.0</text></svg>
<div class="b" style="left:1702.5px;top:753.7px;line-height:16px;color:#6c7580;font-size:12.5px;letter-spacing:0.082px;">Numeric Label</div>
<svg style="left:1683px;top:786px;" width="16" height="12" viewBox="0 0 16 12"><rect x=".5" y="1" width="14.500" height="10" fill="#18d41c" stroke="#0a8a10" stroke-width="1"/><text x="2.5" y="8" font-family="Liberation Sans,sans-serif" font-size="4.6" font-weight="bold" fill="#064" >Auto</text></svg>
<div class="b" style="left:1702.5px;top:784.7px;line-height:16px;color:#6c7580;font-size:12.5px;letter-spacing:0.222px;">Multi-State Indicator</div>
<svg style="left:1683px;top:817px;" width="16" height="12" viewBox="0 0 16 12"><rect x=".5" y="1" width="15" height="10" fill="#0a4a10" stroke="#072" stroke-width="1"/><text x="1.5" y="9" font-family="Liberation Sans,sans-serif" font-size="7" font-weight="bold" fill="#28e030" >LEd</text></svg>
<div class="b" style="left:1702.5px;top:815.7px;line-height:16px;color:#6c7580;font-size:12.5px;letter-spacing:-0.212px;">LED Display</div>
<svg style="left:1683px;top:848px;" width="16" height="12" viewBox="0 0 16 12"><rect x="7" y="-1" width="3" height="14" fill="#fff" stroke="#222" stroke-width="1"/><path fill="#222" d="M2.500 3.500v5L6 6z"/></svg>
<div class="b" style="left:1702.5px;top:846.7px;line-height:16px;color:#6c7580;font-size:12.5px;letter-spacing:0.106px;">Moving Analog Indicator</div>
<svg style="left:1683px;top:879px;" width="16" height="12" viewBox="0 0 16 12"><rect x="1.500" y=".5" width="12" height="11" fill="#fff" stroke="#777" stroke-width="1"/><rect x="3" y="2" width="9" height="8" fill="#7fc0e8"/><path fill="#3c9a3c" d="M3 10V7.500l2.500-2 3 2.500 1.500-1 2 1.500V10z"/><circle cx="9.500" cy="4" r="1" fill="#f4d03f"/></svg>
<div class="b" style="left:1702.5px;top:877.7px;line-height:16px;color:#6c7580;font-size:12.5px;letter-spacing:0.495px;">Image</div>
<svg style="left:1683px;top:910px;" width="16" height="12" viewBox="0 0 16 12"><rect x=".5" y="3.500" width="14" height="5" fill="#8a86c8" stroke="#555" stroke-width="1"/><rect x="11" y="4" width="3" height="4" fill="#ddd"/></svg>
<div class="b" style="left:1702.5px;top:908.7px;line-height:16px;color:#6c7580;font-size:12.5px;letter-spacing:-0.317px;">Progress Bar</div>
<div style="left:1656px;top:938px;width:207px;height:6px;overflow:hidden;"><svg style="left:27px;top:2px;" width="16" height="12" viewBox="0 0 16 12"><rect x="1" y="0" width="14" height="12" rx="3" fill="#19d81f"/></svg><div class="b" style="left:46.5px;top:1.0px;line-height:16px;color:#6c7580;">Cylindrical Tank</div></div>
<div style="left:1879px;top:34px;width:3px;height:32px;background:#dfe3e7;border-left:1px solid #c3c9cf;"></div>
<div style="left:1689px;top:951px;width:1px;height:11px;background:#b9bfc5;"></div>
<div style="left:1751px;top:951px;width:1px;height:11px;background:#b9bfc5;"></div>
<div style="left:1793px;top:951px;width:1px;height:11px;background:#b9bfc5;"></div>
<div style="left:1873px;top:951px;width:1px;height:11px;background:#b9bfc5;"></div>
<div class="t" style="left:1695px;top:957.0px;line-height:16px;font-size:12.500px;color:#111;">(632,87)</div>
<div class="t" style="left:1758px;top:957.0px;line-height:16px;font-size:12.500px;color:#111;">100%</div>
<div class="t" style="left:1798.5px;top:957.0px;line-height:16px;font-size:12.500px;color:#111;">840 / 1024 mb</div>
<div style="left:281px;top:456px;width:1292px;height:460px;background:#fafafa;border:1px solid #5c5c5c;border-right:3px solid #6e6e6e;border-bottom:3px solid #6e6e6e;"></div>
<div style="left:282px;top:457px;width:1288px;height:456px;border:4px solid #f1f1f1;border-right:2px solid #d9d9d9;border-bottom:2px solid #d9d9d9;"></div>
<div style="left:286px;top:461px;width:1283px;height:19px;background:#d8ebfd;border-bottom:1px solid #c5d5e4;"></div>
<div class="t" style="left:289.5px;top:461.7px;line-height:16px;font-size:11px;letter-spacing:-0.136px;">Database Query Browser</div>
<svg style="left:1535px;top:466px;" width="11" height="8" viewBox="0 0 11 8"><rect x=".6" y=".6" width="9.800" height="6.800" fill="none" stroke="#55687b" stroke-width="1.200"/><path fill="none" stroke="#55687b" stroke-width="1" d="M2.500 3v2.500H5"/></svg>
<svg style="left:1553.5px;top:465.5px;" width="10" height="10" viewBox="0 0 10 10"><path stroke="#55687b" stroke-width="1.300" d="M.5 .5l9 9M9.500 .5l-9 9"/></svg>
<div style="left:293px;top:487px;width:1185px;height:58px;background:#fff;border:1px solid #b9c0c7;"></div>
<div style="left:294px;top:488px;width:1170px;height:18px;background:#a0b0ee;"></div>
<div class="mono" style="left:294.500px;top:490px;line-height:17px;color:#1a1a1a;"><b style="color:#000080;">SELECT</b> * <b style="color:#000080;">FROM</b> Recette_Log</div>
<div style="left:1464px;top:488px;width:13px;height:44px;background:#fafafa;border-left:1px solid #d5d9dd;"></div>
<svg style="left:1471px;top:496px" width="1" height="1"><path fill="none" stroke="#55687b" stroke-width="1.3" d="M-3.2 1.6L0 -1.6L3.2 1.6"/></svg>
<svg style="left:1471px;top:524.5px" width="1" height="1"><path fill="none" stroke="#55687b" stroke-width="1.3" d="M-3.2 -1.6L0 1.6L3.2 -1.6"/></svg>
<div style="left:294px;top:532px;width:1170px;height:12px;background:#fafafa;border-top:1px solid #c9cfd5;"></div>
<div style="left:1464px;top:532px;width:13px;height:12px;background:#fafafa;"></div>
<svg style="left:302px;top:538px" width="1" height="1"><path fill="none" stroke="#55687b" stroke-width="1.3" d="M1.6 -3.2L-1.6 0L1.6 3.2"/></svg>
<svg style="left:1457.5px;top:538px" width="1" height="1"><path fill="none" stroke="#55687b" stroke-width="1.3" d="M-1.6 -3.2L1.6 0L-1.6 3.2"/></svg>
<div style="left:1482px;top:487px;width:79px;height:58px;background:linear-gradient(#fff,#eef1f4);border:1px solid #c3c9cf;border-radius:2px;"></div>
<svg style="left:1515px;top:496px;" width="15" height="18" viewBox="0 0 15 18"><path fill="#55687b" d="M0 0L15 9 0 18z"/></svg>
<div class="b" style="left:1482px;width:79px;text-align:center;top:523px;line-height:16px;color:#666;">Execute</div>
<div style="left:295px;top:555px;width:14px;height:14px;background:#5badea;border-radius:2.500px;"><svg style="left:2px;top:2.5px;" width="10" height="9" viewBox="0 0 10 9"><path fill="none" stroke="#fff" stroke-width="2" d="M1.200 4.500L3.800 7.200 8.800 1.600"/></svg></div>
<div class="t" style="left:313px;top:554.5px;line-height:16px;font-size:12px;letter-spacing:-0.157px;">Limit SELECT to:</div>
<div style="left:408px;top:549px;width:50px;height:26px;background:#fff;border:1px solid #c3c9cf;border-radius:2px;"></div>
<div class="t" style="left:414.5px;top:554.5px;line-height:16px;">1000</div>
<div class="t" style="left:463px;top:554.5px;line-height:16px;">rows</div>
<svg style="left:296px;top:587.5px" width="1" height="1"><path fill="none" stroke="#55687b" stroke-width="1.1" d="M-2.8 1.4L0 -1.4L2.8 1.4"/></svg>
<svg style="left:316px;top:586.5px" width="1" height="1"><path fill="none" stroke="#55687b" stroke-width="1.1" d="M-2.8 -1.4L0 1.4L2.8 -1.4"/></svg>
<svg style="left:915px;top:584.5px;" width="24" height="5" viewBox="0 0 24 5"><rect x="0" y="0" width="1" height="5" fill="#b4bbc2"/><rect x="2" y="0" width="1" height="5" fill="#b4bbc2"/><rect x="4" y="0" width="1" height="5" fill="#b4bbc2"/><rect x="6" y="0" width="1" height="5" fill="#b4bbc2"/><rect x="8" y="0" width="1" height="5" fill="#b4bbc2"/><rect x="10" y="0" width="1" height="5" fill="#b4bbc2"/><rect x="12" y="0" width="1" height="5" fill="#b4bbc2"/><rect x="14" y="0" width="1" height="5" fill="#b4bbc2"/><rect x="16" y="0" width="1" height="5" fill="#b4bbc2"/><rect x="18" y="0" width="1" height="5" fill="#b4bbc2"/><rect x="20" y="0" width="1" height="5" fill="#b4bbc2"/><rect x="22" y="0" width="1" height="5" fill="#b4bbc2"/></svg>
<div style="left:291px;top:592px;width:1073px;height:319px;background:#fff;border:1px solid #c3c9cf;"></div>
<div style="left:292px;top:593px;width:1071px;height:23px;background:#dde1e5;"></div>
<div style="left:292px;top:593px;width:6px;height:23px;border-right:1px solid #c9cfd5;"></div>
<div style="left:1359px;top:593px;width:4px;height:23px;border-left:1px solid #c9cfd5;"></div>
<div style="left:299px;top:594px;width:97px;height:23px;background:#fff;border-top:3px solid #47a8e4;"></div>
<svg style="left:308px;top:599.5px;" width="8" height="12" viewBox="0 0 8 12"><path fill="#5a6b7c" d="M5.600 0L.3 7h3.200L2.200 12 7.800 4.800H4.600z"/></svg>
<div class="b" style="left:324.5px;top:597.5px;line-height:16px;font-size:12.4px;letter-spacing:-0.123px;">Resultset 1</div>
<div style="left:292px;top:617px;width:1071px;height:27px;background:#fff;border-bottom:1px solid #b9c0c8;"></div>
<div style="left:292px;top:617px;width:800px;height:26px;background:linear-gradient(#fff,#fff 45%,#eef1f6);"></div>
<div class="b" style="left:303.5px;top:622.5px;line-height:16px;color:#2b2b2b;font-size:12.4px;letter-spacing:-0.014px;">Recette</div>
<div style="left:392px;top:617px;width:1px;height:26px;background:#b9c0c8;"></div>
<div class="b" style="left:403.5px;top:622.5px;line-height:16px;color:#2b2b2b;font-size:12.4px;letter-spacing:-0.183px;">Etape_Tran...</div>
<div style="left:492px;top:617px;width:1px;height:26px;background:#b9c0c8;"></div>
<div class="b" style="left:503.5px;top:622.5px;line-height:16px;color:#2b2b2b;font-size:12.4px;letter-spacing:0.204px;">Temperatur...</div>
<div style="left:592px;top:617px;width:1px;height:26px;background:#b9c0c8;"></div>
<div class="b" style="left:603.5px;top:622.5px;line-height:16px;color:#2b2b2b;font-size:12.4px;letter-spacing:0.180px;">Temps Debut</div>
<div style="left:742px;top:617px;width:1px;height:26px;background:#b9c0c8;"></div>
<div class="b" style="left:753.5px;top:622.5px;line-height:16px;color:#2b2b2b;font-size:12.4px;letter-spacing:0.204px;">Temperatur...</div>
<div style="left:842px;top:617px;width:1px;height:26px;background:#b9c0c8;"></div>
<div class="b" style="left:853.5px;top:622.5px;line-height:16px;color:#2b2b2b;font-size:12.4px;letter-spacing:0.024px;">Temps Fin</div>
<div style="left:992px;top:617px;width:1px;height:26px;background:#b9c0c8;"></div>
<div class="b" style="left:1003.5px;top:622.5px;line-height:16px;color:#2b2b2b;font-size:12.4px;letter-spacing:-0.222px;">Temps Accu...</div>
<div style="left:1092px;top:617px;width:1px;height:26px;background:#b9c0c8;"></div>
<div style="left:292px;top:644px;width:800px;height:17.5px;background:#efefef;"></div>
<div style="left:391px;top:644px;width:2px;height:18px;background:#fafafa;"></div>
<div style="left:491px;top:644px;width:2px;height:18px;background:#fafafa;"></div>
<div style="left:591px;top:644px;width:2px;height:18px;background:#fafafa;"></div>
<div style="left:741px;top:644px;width:2px;height:18px;background:#fafafa;"></div>
<div style="left:841px;top:644px;width:2px;height:18px;background:#fafafa;"></div>
<div style="left:991px;top:644px;width:2px;height:18px;background:#fafafa;"></div>
<div class="t" style="left:292px;width:89.5px;text-align:right;top:645px;line-height:16px;color:#333;">5</div>
<div class="t" style="left:392px;width:89.5px;text-align:right;top:645px;line-height:16px;color:#333;">10</div>
<div class="t" style="left:492px;width:89.5px;text-align:right;top:645px;line-height:16px;color:#333;">64,312</div>
<div class="t" style="left:603.5px;top:645.0px;line-height:16px;color:#333;">2024-09-17 14:17:29</div>
<div class="t" style="left:742px;width:89.5px;text-align:right;top:645px;line-height:16px;color:#333;">64,637</div>
<div class="t" style="left:853.5px;top:645.0px;line-height:16px;color:#333;">2024-09-17 14:17:43</div>
<div style="left:1060px;top:649px;width:22px;height:8px;background:#6e6e6e;border-radius:1px;"><div class="t" style="left:0;width:22px;text-align:center;top:0;line-height:8px;font-size:6.500px;font-weight:bold;color:#fff;letter-spacing:.2px;">NULL</div></div>
<div class="t" style="left:292px;width:89.5px;text-align:right;top:663px;line-height:16px;color:#333;">6</div>
<div class="t" style="left:392px;width:89.5px;text-align:right;top:663px;line-height:16px;color:#333;">1</div>
<div class="t" style="left:492px;width:89.5px;text-align:right;top:663px;line-height:16px;color:#333;">64,861</div>
<div class="t" style="left:603.5px;top:663.0px;line-height:16px;color:#333;">2024-09-17 14:17:57</div>
<div class="t" style="left:742px;width:89.5px;text-align:right;top:663px;line-height:16px;color:#333;">64,922</div>
<div class="t" style="left:853.5px;top:663.0px;line-height:16px;color:#333;">2024-09-17 14:18:01</div>
<div style="left:1060px;top:667px;width:22px;height:8px;background:#6e6e6e;border-radius:1px;"><div class="t" style="left:0;width:22px;text-align:center;top:0;line-height:8px;font-size:6.500px;font-weight:bold;color:#fff;letter-spacing:.2px;">NULL</div></div>
<div style="left:292px;top:680px;width:800px;height:17px;background:#efefef;"></div>
<div style="left:391px;top:680px;width:2px;height:18px;background:#fafafa;"></div>
<div style="left:491px;top:680px;width:2px;height:18px;background:#fafafa;"></div>
<div style="left:591px;top:680px;width:2px;height:18px;background:#fafafa;"></div>
<div style="left:741px;top:680px;width:2px;height:18px;background:#fafafa;"></div>
<div style="left:841px;top:680px;width:2px;height:18px;background:#fafafa;"></div>
<div style="left:991px;top:680px;width:2px;height:18px;background:#fafafa;"></div>
<div class="t" style="left:292px;width:89.5px;text-align:right;top:681px;line-height:16px;color:#333;">7</div>
<div class="t" style="left:392px;width:89.5px;text-align:right;top:681px;line-height:16px;color:#333;">1</div>
<div class="t" style="left:492px;width:89.5px;text-align:right;top:681px;line-height:16px;color:#333;">63,093</div>
<div class="t" style="left:603.5px;top:681.0px;line-height:16px;color:#333;">2024-09-17 14:19:21</div>
<div class="t" style="left:742px;width:89.5px;text-align:right;top:681px;line-height:16px;color:#333;">62,325</div>
<div class="t" style="left:853.5px;top:681.0px;line-height:16px;color:#333;">2024-09-17 14:19:28</div>
<div style="left:1060px;top:685px;width:22px;height:8px;background:#6e6e6e;border-radius:1px;"><div class="t" style="left:0;width:22px;text-align:center;top:0;line-height:8px;font-size:6.500px;font-weight:bold;color:#fff;letter-spacing:.2px;">NULL</div></div>
<div class="t" style="left:292px;width:89.5px;text-align:right;top:699px;line-height:16px;color:#333;">8</div>
<div class="t" style="left:392px;width:89.5px;text-align:right;top:699px;line-height:16px;color:#333;">1</div>
<div class="t" style="left:492px;width:89.5px;text-align:right;top:699px;line-height:16px;color:#333;">46,14</div>
<div class="t" style="left:603.5px;top:699.0px;line-height:16px;color:#333;">2024-09-17 14:24:22</div>
<div class="t" style="left:742px;width:89.5px;text-align:right;top:699px;line-height:16px;color:#333;">46,435</div>
<div class="t" style="left:853.5px;top:699.0px;line-height:16px;color:#333;">2024-09-17 14:24:27</div>
<div style="left:1060px;top:703px;width:22px;height:8px;background:#6e6e6e;border-radius:1px;"><div class="t" style="left:0;width:22px;text-align:center;top:0;line-height:8px;font-size:6.500px;font-weight:bold;color:#fff;letter-spacing:.2px;">NULL</div></div>
<div style="left:292px;top:716px;width:800px;height:17px;background:#efefef;"></div>
<div style="left:391px;top:716px;width:2px;height:18px;background:#fafafa;"></div>
<div style="left:491px;top:716px;width:2px;height:18px;background:#fafafa;"></div>
<div style="left:591px;top:716px;width:2px;height:18px;background:#fafafa;"></div>
<div style="left:741px;top:716px;width:2px;height:18px;background:#fafafa;"></div>
<div style="left:841px;top:716px;width:2px;height:18px;background:#fafafa;"></div>
<div style="left:991px;top:716px;width:2px;height:18px;background:#fafafa;"></div>
<div class="t" style="left:292px;width:89.5px;text-align:right;top:717px;line-height:16px;color:#333;">9</div>
<div class="t" style="left:392px;width:89.5px;text-align:right;top:717px;line-height:16px;color:#333;">1</div>
<div class="t" style="left:492px;width:89.5px;text-align:right;top:717px;line-height:16px;color:#333;">56,895</div>
<div class="t" style="left:603.5px;top:717.0px;line-height:16px;color:#333;">2024-09-17 15:03:56</div>
<div class="t" style="left:742px;width:89.5px;text-align:right;top:717px;line-height:16px;color:#333;">56,837</div>
<div class="t" style="left:853.5px;top:717.0px;line-height:16px;color:#333;">2024-09-17 15:04:15</div>
<div style="left:1060px;top:721px;width:22px;height:8px;background:#6e6e6e;border-radius:1px;"><div class="t" style="left:0;width:22px;text-align:center;top:0;line-height:8px;font-size:6.500px;font-weight:bold;color:#fff;letter-spacing:.2px;">NULL</div></div>
<div class="t" style="left:292px;width:89.5px;text-align:right;top:735px;line-height:16px;color:#333;">10</div>
<div class="t" style="left:392px;width:89.5px;text-align:right;top:735px;line-height:16px;color:#333;">1</div>
<div class="t" style="left:492px;width:89.5px;text-align:right;top:735px;line-height:16px;color:#333;">65,08</div>
<div class="t" style="left:603.5px;top:735.0px;line-height:16px;color:#333;">2024-09-18 08:09:05</div>
<div class="t" style="left:742px;width:89.5px;text-align:right;top:735px;line-height:16px;color:#333;">65,072</div>
<div class="t" style="left:853.5px;top:735.0px;line-height:16px;color:#333;">2024-09-18 08:09:14</div>
<div style="left:1060px;top:739px;width:22px;height:8px;background:#6e6e6e;border-radius:1px;"><div class="t" style="left:0;width:22px;text-align:center;top:0;line-height:8px;font-size:6.500px;font-weight:bold;color:#fff;letter-spacing:.2px;">NULL</div></div>
<div style="left:292px;top:752px;width:800px;height:17px;background:#efefef;"></div>
<div style="left:391px;top:752px;width:2px;height:18px;background:#fafafa;"></div>
<div style="left:491px;top:752px;width:2px;height:18px;background:#fafafa;"></div>
<div style="left:591px;top:752px;width:2px;height:18px;background:#fafafa;"></div>
<div style="left:741px;top:752px;width:2px;height:18px;background:#fafafa;"></div>
<div style="left:841px;top:752px;width:2px;height:18px;background:#fafafa;"></div>
<div style="left:991px;top:752px;width:2px;height:18px;background:#fafafa;"></div>
<div class="t" style="left:292px;width:89.5px;text-align:right;top:753px;line-height:16px;color:#333;">11</div>
<div class="t" style="left:392px;width:89.5px;text-align:right;top:753px;line-height:16px;color:#333;">0</div>
<div class="t" style="left:492px;width:89.5px;text-align:right;top:753px;line-height:16px;color:#333;">45,809</div>
<div class="t" style="left:603.5px;top:753.0px;line-height:16px;color:#333;">2024-09-18 08:18:40</div>
<div style="left:810px;top:757px;width:22px;height:8px;background:#6e6e6e;border-radius:1px;"><div class="t" style="left:0;width:22px;text-align:center;top:0;line-height:8px;font-size:6.500px;font-weight:bold;color:#fff;letter-spacing:.2px;">NULL</div></div>
<div style="left:853px;top:757px;width:22px;height:8px;background:#6e6e6e;border-radius:1px;"><div class="t" style="left:0;width:22px;text-align:center;top:0;line-height:8px;font-size:6.500px;font-weight:bold;color:#fff;letter-spacing:.2px;">NULL</div></div>
<div style="left:1060px;top:757px;width:22px;height:8px;background:#6e6e6e;border-radius:1px;"><div class="t" style="left:0;width:22px;text-align:center;top:0;line-height:8px;font-size:6.500px;font-weight:bold;color:#fff;letter-spacing:.2px;">NULL</div></div>
<div style="left:292px;top:884px;width:1071px;height:26px;background:#fafafa;border-top:1px solid #c9cfd5;"></div>
<div class="t" style="left:296.5px;top:889.5px;line-height:16px;color:#333;">7 rows fetched in 0,011s</div>
<div style="left:1073px;top:885px;width:104px;height:25px;background:linear-gradient(#fdfdfd,#e9e6e2 55%,#dedad5);border-left:1px solid #cfcdc8;border-bottom:1px solid #cfcdc8;"></div>
<div style="left:1177px;top:885px;width:51px;height:25px;background:linear-gradient(#fdfdfd,#e9e6e2 55%,#dedad5);border-left:1px solid #cfcdc8;border-bottom:1px solid #cfcdc8;"></div>
<div style="left:1228px;top:885px;width:62px;height:25px;background:#f0efec;border-left:1px solid #cfcdc8;border-bottom:1px solid #cfcdc8;"></div>
<div style="left:1290px;top:885px;width:72px;height:25px;background:#f0efec;border-left:1px solid #cfcdc8;border-bottom:1px solid #cfcdc8;"></div>
<svg style="left:1079px;top:891.5px;" width="12" height="12" viewBox="0 0 12 12"><g fill="none" stroke="#4a6078" stroke-width="1.500"><path d="M1.200 5.200A5 5 0 0 1 10.400 3.600"/><path d="M10.800 6.800A5 5 0 0 1 1.600 8.400"/></g><path fill="#4a6078" d="M11.600 .6v4.200H7.400z"/><path fill="#4a6078" d="M.4 11.400V7.200h4.200z"/></svg>
<div class="b" style="left:1095px;top:889.5px;line-height:16px;color:#4a6078;font-size:12.4px;letter-spacing:-0.137px;">Auto Refresh</div>
<svg style="left:1183px;top:891.5px;" width="12" height="12" viewBox="0 0 12 12"><path fill="#4a6078" d="M.5 11.500l.8-3 6.800-6.800 2.200 2.200-6.800 6.800zM8.900 .9l1-1 2.200 2.200-1 1z"/></svg>
<div class="b" style="left:1199.5px;top:889.5px;line-height:16px;color:#4a6078;">Edit</div>
<svg style="left:1234px;top:892.5px;" width="12" height="10" viewBox="0 0 12 10"><path fill="none" stroke="#a9b5c1" stroke-width="2.200" d="M1 5l3.200 3.500L11 1"/></svg>
<div class="b" style="left:1250px;top:889.5px;line-height:16px;color:#a9b5c1;">Apply</div>
<svg style="left:1297px;top:891px;" width="10" height="13" viewBox="0 0 10 13"><g fill="none" stroke="#a9b5c1" stroke-width="1.100"><path d="M0 2.500h10M3 2.500V.6h4v1.900M1.200 4.500h7.600v8H1.200zM3.800 6v5M6.200 6v5"/></g></svg>
<div class="b" style="left:1312.5px;top:889.5px;line-height:16px;color:#a9b5c1;">Discard</div>
<svg style="left:1371.5px;top:602.5px" width="1" height="1"><path fill="none" stroke="#55687b" stroke-width="1.1" d="M1.4 -2.8L-1.4 0L1.4 2.8"/></svg>
<svg style="left:1370.5px;top:622px" width="1" height="1"><path fill="none" stroke="#55687b" stroke-width="1.1" d="M-1.4 -2.8L1.4 0L-1.4 2.8"/></svg>
<svg style="left:1369px;top:740px;" width="4" height="22" viewBox="0 0 4 22"><rect x="0" y="0" width="4" height="1" fill="#b4bbc2"/><rect x="0" y="2" width="4" height="1" fill="#b4bbc2"/><rect x="0" y="4" width="4" height="1" fill="#b4bbc2"/><rect x="0" y="6" width="4" height="1" fill="#b4bbc2"/><rect x="0" y="8" width="4" height="1" fill="#b4bbc2"/><rect x="0" y="10" width="4" height="1" fill="#b4bbc2"/><rect x="0" y="12" width="4" height="1" fill="#b4bbc2"/><rect x="0" y="14" width="4" height="1" fill="#b4bbc2"/><rect x="0" y="16" width="4" height="1" fill="#b4bbc2"/><rect x="0" y="18" width="4" height="1" fill="#b4bbc2"/><rect x="0" y="20" width="4" height="1" fill="#b4bbc2"/></svg>
<div style="left:1378px;top:592px;width:164px;height:26px;background:#fff;border:1px solid #c3c9cf;border-radius:2px;"></div>
<div class="t" style="left:1384.5px;top:597.5px;line-height:16px;">PieChart</div>
<svg style="left:1525.5px;top:603px;" width="9" height="6" viewBox="0 0 9 6"><path fill="#55687b" d="M0 0h9L4.500 6z"/></svg>
<svg style="left:1548px;top:599.5px;" width="12" height="12" viewBox="0 0 12 12"><g fill="none" stroke="#55687b" stroke-width="1.500"><path d="M1.200 5.200A5 5 0 0 1 10.400 3.600"/><path d="M10.800 6.800A5 5 0 0 1 1.600 8.400"/></g><path fill="#55687b" d="M11.600 .6v4.200H7.400z"/><path fill="#55687b" d="M.4 11.400V7.200h4.200z"/></svg>
<div style="left:1378px;top:623px;width:185px;height:289px;background:#fafafa;border:1px solid #c3c9cf;"></div>
<div style="left:1379px;top:624px;width:183px;height:23px;background:#dde1e5;"></div>
<div style="left:1379px;top:624px;width:4px;height:23px;border-right:1px solid #c9cfd5;"></div>
<div style="left:1558px;top:624px;width:4px;height:23px;border-left:1px solid #c9cfd5;"></div>
<div style="left:1386px;top:625px;width:58px;height:23px;background:#fff;border-top:3px solid #47a8e4;"></div>
<div class="b" style="left:1392px;top:628.5px;line-height:16px;">Schema</div>
<div class="b" style="left:1450.5px;top:628.5px;line-height:16px;">History</div>
<div style="left:1380px;top:649px;width:180px;height:259px;background:#fff;border:1px solid #b9c0c7;"></div>
<div style="left:1547px;top:651px;width:12px;height:244px;background:#c1c6cb;"></div>
<div style="left:1548px;top:652px;width:10px;height:12px;background:#fafafa;"></div>
<svg style="left:1553px;top:658.5px" width="1" height="1"><path fill="none" stroke="#55687b" stroke-width="1.2" d="M-2.8 1.4L0 -1.4L2.8 1.4"/></svg>
<div style="left:1548px;top:795px;width:10px;height:100px;background:#fafafa;"></div>
<svg style="left:1553px;top:887px" width="1" height="1"><path fill="none" stroke="#55687b" stroke-width="1.2" d="M-2.8 -1.4L0 1.4L2.8 -1.4"/></svg>
<svg style="left:1550.5px;top:720px;" width="5" height="22" viewBox="0 0 5 22"><rect x="0" y="0" width="5" height="1" fill="#fff"/><rect x="0" y="2" width="5" height="1" fill="#fff"/><rect x="0" y="4" width="5" height="1" fill="#fff"/><rect x="0" y="6" width="5" height="1" fill="#fff"/><rect x="0" y="8" width="5" height="1" fill="#fff"/><rect x="0" y="10" width="5" height="1" fill="#fff"/><rect x="0" y="12" width="5" height="1" fill="#fff"/><rect x="0" y="14" width="5" height="1" fill="#fff"/><rect x="0" y="16" width="5" height="1" fill="#fff"/></svg>
<div style="left:1383px;top:895px;width:164px;height:12px;background:#fafafa;"></div>
<div style="left:1395px;top:895px;width:100px;height:12px;background:#c1c6cb;"></div>
<svg style="left:1389px;top:901px" width="1" height="1"><path fill="none" stroke="#55687b" stroke-width="1.2" d="M1.4 -2.8L-1.4 0L1.4 2.8"/></svg>
<svg style="left:1540px;top:901px" width="1" height="1"><path fill="none" stroke="#55687b" stroke-width="1.2" d="M-1.4 -2.8L1.4 0L-1.4 2.8"/></svg>
<svg style="left:1437px;top:898.5px;" width="18" height="5" viewBox="0 0 18 5"><rect x="0" y="0" width="1" height="5" fill="#fff"/><rect x="2" y="0" width="1" height="5" fill="#fff"/><rect x="4" y="0" width="1" height="5" fill="#fff"/><rect x="6" y="0" width="1" height="5" fill="#fff"/><rect x="8" y="0" width="1" height="5" fill="#fff"/><rect x="10" y="0" width="1" height="5" fill="#fff"/><rect x="12" y="0" width="1" height="5" fill="#fff"/><rect x="14" y="0" width="1" height="5" fill="#fff"/><rect x="16" y="0" width="1" height="5" fill="#fff"/></svg>
<div style="left:1382px;top:671px;width:164px;height:20px;background:#47a8e4;"></div>
<div style="left:1387px;top:664px;width:1px;height:231px;background:#c9d3dc;"></div>
<div style="left:1387px;top:671px;width:1px;height:20px;background:#fff;"></div>
<div style="left:1402px;top:691px;width:1px;height:131px;background:#c9d3dc;"></div>
<svg style="left:1385px;top:656.5px;" width="6" height="10" viewBox="0 0 6 10"><path fill="#8fa3b7" d="M.5 .5L5.500 5L.5 9.500z"/></svg>
<div style="left:1392px;top:661.5px;width:6px;height:1px;background:#c9d3dc;"></div>
<svg style="left:1401px;top:656.0px;" width="12" height="11" viewBox="0 0 12 11"><rect x=".7" y=".7" width="10.600" height="9.600" fill="none" stroke="#55687b" stroke-width="1.400"/><path stroke="#55687b" stroke-width="1.300" d="M.7 4h10.600M.7 7h10.600M6 .7v9.600"/></svg>
<div class="t" style="left:1419.5px;top:653.5px;line-height:16px;">DATEFIN</div>
<svg style="left:1382.5px;top:679.0px;" width="10" height="6" viewBox="0 0 10 6"><path fill="#fff" d="M.5 .5h9L5 5.500z"/></svg>
<div style="left:1393px;top:681.5px;width:5px;height:1px;background:#fff;"></div>
<svg style="left:1401px;top:676.0px;" width="12" height="11" viewBox="0 0 12 11"><rect x=".7" y=".7" width="10.600" height="9.600" fill="none" stroke="#5a6b7c" stroke-width="1.400"/><path stroke="#5a6b7c" stroke-width="1.300" d="M.7 4h10.600M.7 7h10.600M6 .7v9.600"/></svg>
<div class="t" style="left:1419.5px;top:673.5px;line-height:16px;color:#fff;">Recette_Log</div>
<svg style="left:1385px;top:836.5px;" width="6" height="10" viewBox="0 0 6 10"><path fill="#8fa3b7" d="M.5 .5L5.500 5L.5 9.500z"/></svg>
<div style="left:1392px;top:841.5px;width:6px;height:1px;background:#c9d3dc;"></div>
<svg style="left:1401px;top:836.0px;" width="12" height="11" viewBox="0 0 12 11"><rect x=".7" y=".7" width="10.600" height="9.600" fill="none" stroke="#55687b" stroke-width="1.400"/><path stroke="#55687b" stroke-width="1.300" d="M.7 4h10.600M.7 7h10.600M6 .7v9.600"/></svg>
<div class="t" style="left:1419.5px;top:833.5px;line-height:16px;">group_table</div>
<svg style="left:1385px;top:856.5px;" width="6" height="10" viewBox="0 0 6 10"><path fill="#8fa3b7" d="M.5 .5L5.500 5L.5 9.500z"/></svg>
<div style="left:1392px;top:861.5px;width:6px;height:1px;background:#c9d3dc;"></div>
<svg style="left:1401px;top:856.0px;" width="12" height="11" viewBox="0 0 12 11"><rect x=".7" y=".7" width="10.600" height="9.600" fill="none" stroke="#55687b" stroke-width="1.400"/><path stroke="#55687b" stroke-width="1.300" d="M.7 4h10.600M.7 7h10.600M6 .7v9.600"/></svg>
<div class="t" style="left:1419.5px;top:853.5px;line-height:16px;">rectte</div>
<svg style="left:1385px;top:876.5px;" width="6" height="10" viewBox="0 0 6 10"><path fill="#8fa3b7" d="M.5 .5L5.500 5L.5 9.500z"/></svg>
<div style="left:1392px;top:881.5px;width:6px;height:1px;background:#c9d3dc;"></div>
<svg style="left:1401px;top:876.0px;" width="12" height="11" viewBox="0 0 12 11"><rect x=".7" y=".7" width="10.600" height="9.600" fill="none" stroke="#55687b" stroke-width="1.400"/><path stroke="#55687b" stroke-width="1.300" d="M.7 4h10.600M.7 7h10.600M6 .7v9.600"/></svg>
<div class="t" style="left:1419.5px;top:873.5px;line-height:16px;">reddd</div>
<div style="left:1403px;top:701.5px;width:11px;height:1px;background:#c9d3dc;"></div>
<div style="left:1403px;top:721.5px;width:11px;height:1px;background:#c9d3dc;"></div>
<div style="left:1403px;top:741.5px;width:11px;height:1px;background:#c9d3dc;"></div>
<div style="left:1403px;top:761.5px;width:11px;height:1px;background:#c9d3dc;"></div>
<div style="left:1403px;top:781.5px;width:11px;height:1px;background:#c9d3dc;"></div>
<div style="left:1403px;top:801.5px;width:11px;height:1px;background:#c9d3dc;"></div>
<div style="left:1403px;top:821.5px;width:11px;height:1px;background:#c9d3dc;"></div>
<div style="left:1382px;top:651px;width:164.5px;height:244px;overflow:hidden;"><div class="t" style="left:33.5px;top:42.5px;line-height:16px;"><span style="color:#1414f0;letter-spacing:0px"><b>Recette</b></span> <i style="color:#2a8a2a">(bigint)</i></div><div class="t" style="left:33.5px;top:62.5px;line-height:16px;"><span style="color:#1414f0;letter-spacing:0.1px">Etape_Transfert_vers_T</span> <i style="color:#2a8a2a"></i></div><div class="t" style="left:33.5px;top:82.5px;line-height:16px;"><span style="color:#1414f0;letter-spacing:0.27px">Temperature debut</span> <i style="color:#2a8a2a">(real)</i></div><div class="t" style="left:33.5px;top:102.5px;line-height:16px;"><span style="color:#1414f0;letter-spacing:0.27px">Temperature Fin</span> <i style="color:#2a8a2a">(real)</i></div><div class="t" style="left:33.5px;top:122.5px;line-height:16px;"><span style="color:#1414f0;letter-spacing:0.27px">Temps Accumul</span> <i style="color:#2a8a2a">(float)</i></div><div class="t" style="left:33.5px;top:142.5px;line-height:16px;"><span style="color:#1414f0;letter-spacing:0.27px">Temps Debut</span> <i style="color:#2a8a2a">(datetime)</i></div><div class="t" style="left:33.5px;top:162.5px;line-height:16px;"><span style="color:#1414f0;letter-spacing:0.27px">Temps Fin</span> <i style="color:#2a8a2a">(datetime)</i></div></div>
<svg style="left:1510px;top:696.5px;" width="14" height="9" viewBox="0 0 14 9"><rect x=".6" y=".6" width="3" height="7.800" rx=".8" fill="#c9ced4" stroke="#5a6470" stroke-width="1.200"/><path fill="#5a6470" d="M4 3.400h1.800l1-1.600 1.100 1.600 1.100-1.600 1.100 1.600 1.100-1.600 1 1.600h.8v3.200H4z"/></svg>
<div style="left:0px;top:944.3px;width:343px;height:1.2px;background:#b4bbc2;"></div>
<div style="left:0px;top:945.5px;width:343px;height:1px;background:#eceef0;"></div>
<div style="left:0px;top:946.4px;width:1882px;height:2px;background:#b9c0c6;"></div>
</body></html>
